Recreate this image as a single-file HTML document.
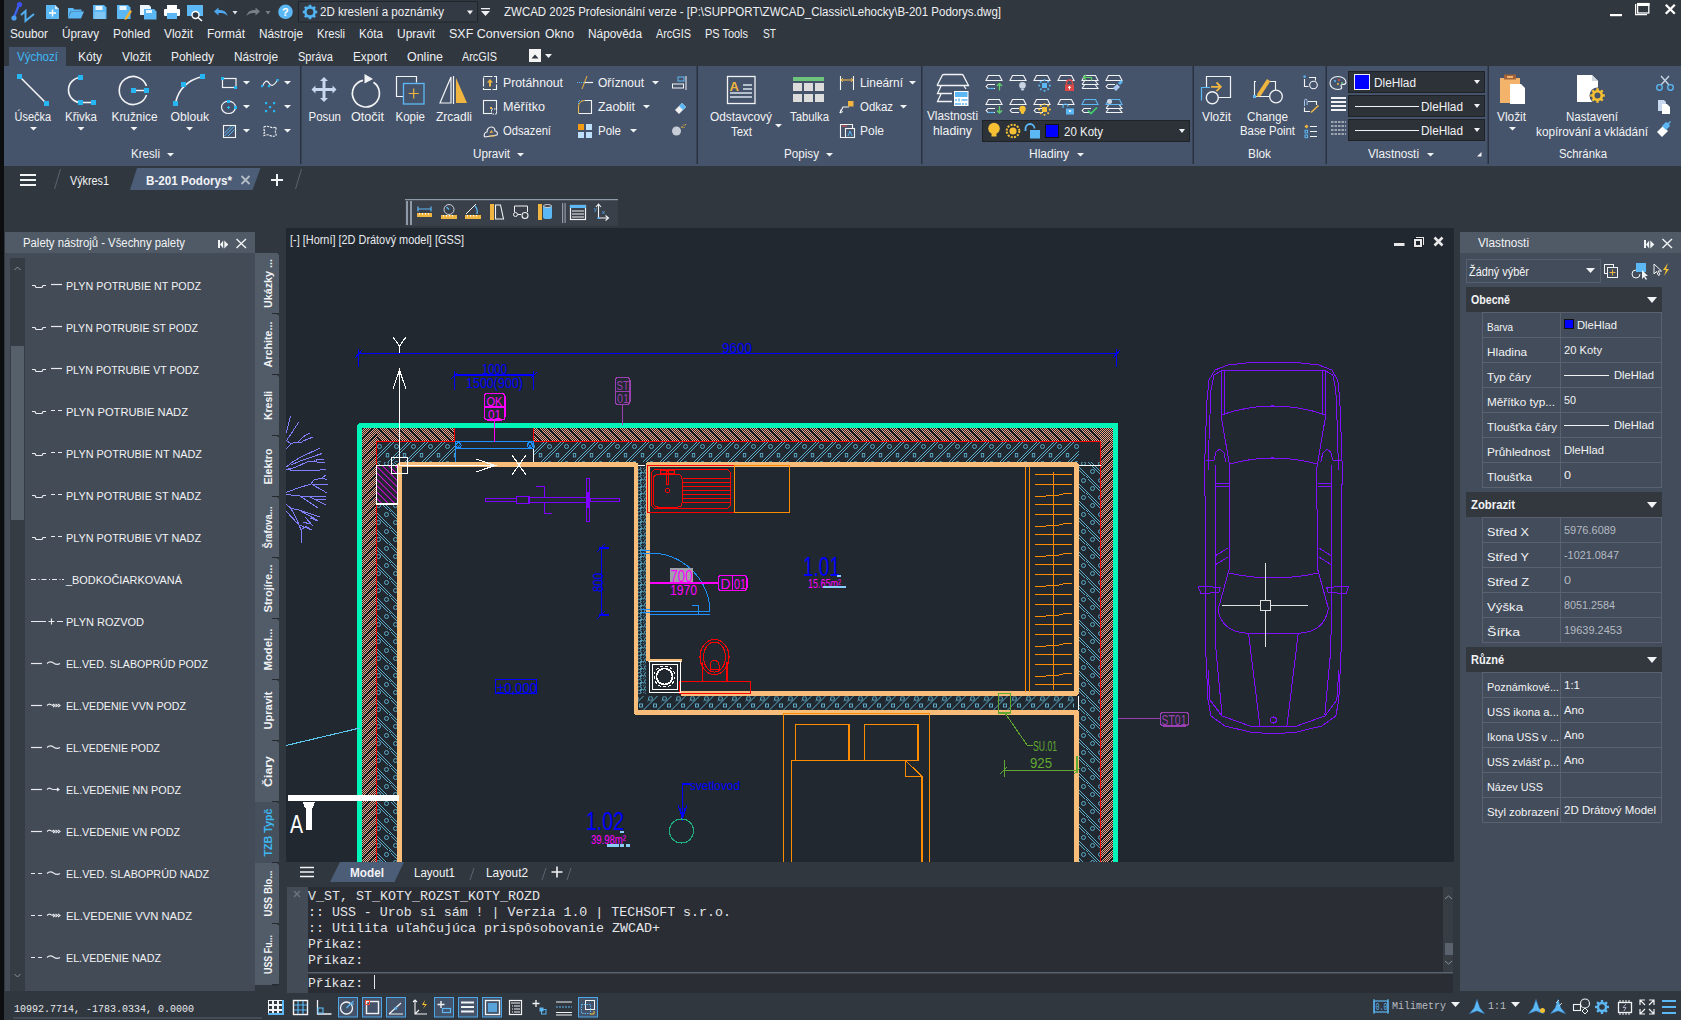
<!DOCTYPE html>
<html><head><meta charset="utf-8">
<style>
*{margin:0;padding:0;box-sizing:border-box}
html,body{width:1681px;height:1020px;overflow:hidden;background:#30363f;font-family:"Liberation Sans",sans-serif}
.a{position:absolute}

</style></head><body>
<div class="a" style="left:0px;top:0px;width:1681px;height:1020px;background:#31373f;"></div><div class="a" style="left:4px;top:66px;width:1677px;height:100px;background:#46546b;"></div><div class="a" style="left:286px;top:228px;width:1168px;height:634px;background:#212830;"></div><div class="a" style="left:5px;top:232px;width:250px;height:759px;background:#434b57;"></div><div class="a" style="left:5px;top:232px;width:250px;height:21px;background:#4f5a66;"></div><div class="a" style="left:1460px;top:232px;width:221px;height:759px;background:#434c5a;"></div><div class="a" style="left:1460px;top:232px;width:221px;height:21px;background:#4f5a66;"></div><div class="a" style="left:287px;top:887px;width:1166px;height:106px;background:#2a2d33;"></div><div class="a" style="left:287px;top:887px;width:21px;height:106px;background:#434b57;"></div><div class="a" style="left:0px;top:0px;width:4px;height:1020px;background:#0c0d0e;"></div><div class="a" style="left:9px;top:47px;width:57px;height:19px;background:#45536a;"></div>
<svg class="a" style="left:0;top:0" width="1681" height="1020" viewBox="0 0 1681 1020" font-family="Liberation Sans">
<line x1="19" y1="5" x2="14" y2="17" stroke="#3d63f0" stroke-width="2.2"/><circle cx="19.5" cy="4.5" r="2.6" fill="#3a52f5"/><circle cx="14" cy="18" r="2.6" fill="#4b9ff0"/><path d="M21 15 L25.5 11 L25.5 21 L34 14" fill="none" stroke="#53b0f0" stroke-width="2"/><path d="M46 5h9l4 4v10h-13z" fill="#5cb8f5"/><path d="M55 5v4h4" fill="#cfe9fb"/><path d="M52.5 9.5v7M49 13h7" stroke="#fff" stroke-width="1.4"/><path d="M68 8h5l1.5 1.5h7v2h-11l-2.5 7z" fill="#5cb8f5"/><path d="M71 11.5h13l-3 7h-13z" fill="#5cb8f5"/><path d="M93 5h11l2.5 2.5v11.5h-13.5z" fill="#5cb8f5"/><rect x="95.5" y="6" width="7" height="4" fill="#eaf5fd"/><rect x="94.5" y="12" width="10.5" height="7" fill="#eaf5fd" opacity=".25"/><path d="M117 5h11l2.5 2.5v11.5h-13.5z" fill="#5cb8f5"/><rect x="119.5" y="6" width="7" height="4" fill="#eaf5fd"/><path d="M125 18l5-8 2 1.2-5 8-2.5.8z" fill="#f2b233"/><path d="M140 5h9l2 2v8h-11z" fill="#eaf5fd"/><path d="M144 9h10l2.5 2.5v8h-12.5z" fill="#5cb8f5"/><rect x="146" y="10" width="6" height="3" fill="#eaf5fd"/><rect x="167" y="5" width="10" height="4" fill="#fff"/><rect x="164" y="9" width="16" height="7" rx="1" fill="#fff"/><rect x="167" y="13" width="10" height="6" fill="#5cb8f5"/><rect x="187" y="5" width="16" height="11" fill="#5cb8f5"/><rect x="188.5" y="6.5" width="13" height="8" fill="#30363f" opacity=".0"/><circle cx="195.5" cy="15" r="3.5" fill="#30363f" stroke="#fff" stroke-width="1.4"/><line x1="198" y1="17.5" x2="202" y2="21" stroke="#fff" stroke-width="1.6"/><path d="M214 11.5l4.5-4v2.5c5 0 8 1.5 9 6-2-2.5-4.5-3-9-3v2.5z" fill="#4fa7ee"/><path d="M232.5 11h5l-2.5 3.5z" fill="#dfe3e8"/><path d="M260 11.5l-4.5-4v2.5c-5 0-8 1.5-9 6 2-2.5 4.5-3 9-3v2.5z" fill="#7a7f86"/><path d="M265.5 11h5l-2.5 3.5z" fill="#7a7f86"/><circle cx="285.5" cy="11.8" r="7.3" fill="#5cb8f5"/><text x="282" y="16" font-size="11" fill="#fff" font-weight="bold">?</text><rect x="298.5" y="1.5" width="179" height="20.5" fill="#343a43" stroke="#22262c"/><g transform="translate(310,12)"><circle r="4.6" fill="none" stroke="#52b4f2" stroke-width="2.6"/><rect x="-1.3" y="-7.2" width="2.6" height="3" fill="#52b4f2" transform="rotate(0)"/><rect x="-1.3" y="-7.2" width="2.6" height="3" fill="#52b4f2" transform="rotate(45)"/><rect x="-1.3" y="-7.2" width="2.6" height="3" fill="#52b4f2" transform="rotate(90)"/><rect x="-1.3" y="-7.2" width="2.6" height="3" fill="#52b4f2" transform="rotate(135)"/><rect x="-1.3" y="-7.2" width="2.6" height="3" fill="#52b4f2" transform="rotate(180)"/><rect x="-1.3" y="-7.2" width="2.6" height="3" fill="#52b4f2" transform="rotate(225)"/><rect x="-1.3" y="-7.2" width="2.6" height="3" fill="#52b4f2" transform="rotate(270)"/><rect x="-1.3" y="-7.2" width="2.6" height="3" fill="#52b4f2" transform="rotate(315)"/></g><text x="320" y="16" font-size="12" fill="#eef0f3" textLength="124" lengthAdjust="spacingAndGlyphs">2D kreslení a poznámky</text><path d="M467 10.5h6l-3.0 4z" fill="#eef0f3"/><rect x="481" y="8" width="9" height="1.3" fill="#eef0f3"/><path d="M481 11h9l-4.5 5z" fill="#eef0f3"/><text x="504" y="15.8" font-size="12" fill="#eef0f3" textLength="497" lengthAdjust="spacingAndGlyphs">ZWCAD 2025 Profesionální verze - [P:\SUPPORT\ZWCAD_Classic\Lehocky\B-201 Podorys.dwg]</text><rect x="1610" y="14" width="12" height="2.2" fill="#fff"/><rect x="1637.6" y="3.6" width="11.2" height="9.4" fill="none" stroke="#fff" stroke-width="1.3"/><rect x="1637" y="3" width="12.5" height="3" fill="#fff"/><path d="M1635.6 4V14.6H1647" fill="none" stroke="#fff" stroke-width="1.2"/><path d="M1665.8 4.8l9 9M1674.8 4.8l-9 9" stroke="#fff" stroke-width="2.3"/><text x="10" y="37.5" font-size="12" fill="#eef0f3" textLength="38" lengthAdjust="spacingAndGlyphs">Soubor</text><text x="62" y="37.5" font-size="12" fill="#eef0f3" textLength="37" lengthAdjust="spacingAndGlyphs">Úpravy</text><text x="113" y="37.5" font-size="12" fill="#eef0f3" textLength="37" lengthAdjust="spacingAndGlyphs">Pohled</text><text x="164" y="37.5" font-size="12" fill="#eef0f3" textLength="29" lengthAdjust="spacingAndGlyphs">Vložit</text><text x="207" y="37.5" font-size="12" fill="#eef0f3" textLength="38" lengthAdjust="spacingAndGlyphs">Formát</text><text x="259" y="37.5" font-size="12" fill="#eef0f3" textLength="44" lengthAdjust="spacingAndGlyphs">Nástroje</text><text x="317" y="37.5" font-size="12" fill="#eef0f3" textLength="28" lengthAdjust="spacingAndGlyphs">Kresli</text><text x="359" y="37.5" font-size="12" fill="#eef0f3" textLength="24" lengthAdjust="spacingAndGlyphs">Kóta</text><text x="397" y="37.5" font-size="12" fill="#eef0f3" textLength="38" lengthAdjust="spacingAndGlyphs">Upravit</text><text x="449" y="37.5" font-size="12" fill="#eef0f3" textLength="91" lengthAdjust="spacingAndGlyphs">SXF Conversion</text><text x="545" y="37.5" font-size="12" fill="#eef0f3" textLength="29" lengthAdjust="spacingAndGlyphs">Okno</text><text x="588" y="37.5" font-size="12" fill="#eef0f3" textLength="54" lengthAdjust="spacingAndGlyphs">Nápověda</text><text x="656" y="37.5" font-size="12" fill="#eef0f3" textLength="35" lengthAdjust="spacingAndGlyphs">ArcGIS</text><text x="705" y="37.5" font-size="12" fill="#eef0f3" textLength="43" lengthAdjust="spacingAndGlyphs">PS Tools</text><text x="763" y="37.5" font-size="12" fill="#eef0f3" textLength="13" lengthAdjust="spacingAndGlyphs">ST</text><text x="17" y="60.5" font-size="12" fill="#3db7f2" textLength="41" lengthAdjust="spacingAndGlyphs">Výchozí</text><text x="78" y="60.5" font-size="12" fill="#eef0f3" textLength="24" lengthAdjust="spacingAndGlyphs">Kóty</text><text x="122" y="60.5" font-size="12" fill="#eef0f3" textLength="29" lengthAdjust="spacingAndGlyphs">Vložit</text><text x="171" y="60.5" font-size="12" fill="#eef0f3" textLength="43" lengthAdjust="spacingAndGlyphs">Pohledy</text><text x="234" y="60.5" font-size="12" fill="#eef0f3" textLength="44" lengthAdjust="spacingAndGlyphs">Nástroje</text><text x="298" y="60.5" font-size="12" fill="#eef0f3" textLength="35" lengthAdjust="spacingAndGlyphs">Správa</text><text x="353" y="60.5" font-size="12" fill="#eef0f3" textLength="34" lengthAdjust="spacingAndGlyphs">Export</text><text x="407" y="60.5" font-size="12" fill="#eef0f3" textLength="36" lengthAdjust="spacingAndGlyphs">Online</text><text x="462" y="60.5" font-size="12" fill="#eef0f3" textLength="35" lengthAdjust="spacingAndGlyphs">ArcGIS</text><rect x="529" y="49" width="12" height="13" fill="#f4f4f4"/><path d="M531.5 58.5h7l-3.5-4z" fill="#30363f"/><path d="M545 54h7l-3.5 4z" fill="#eef0f3"/><rect x="300" y="66" width="1.5" height="98" fill="#2a3140"/><rect x="696.5" y="66" width="1.5" height="98" fill="#2a3140"/><rect x="921" y="66" width="1.5" height="98" fill="#2a3140"/><rect x="1192.5" y="66" width="1.5" height="98" fill="#2a3140"/><rect x="1325.5" y="66" width="1.5" height="98" fill="#2a3140"/><rect x="1487.5" y="66" width="1.5" height="98" fill="#2a3140"/><line x1="19.5" y1="76.5" x2="46.5" y2="103.5" stroke="#f2f3f5" stroke-width="1.6"/><rect x="17" y="74" width="5" height="5" fill="#27b6f4"/><rect x="44" y="101" width="5" height="5" fill="#27b6f4"/><text x="14.5" y="120.5" font-size="12" fill="#f2f3f5" textLength="36.5" lengthAdjust="spacingAndGlyphs">Úsečka</text><path d="M30 127h7l-3.5 3.5z" fill="#f2f3f5"/><path d="M81 77.5 A12.5 12.5 0 0 0 81 102.5 H93" fill="none" stroke="#f2f3f5" stroke-width="1.6"/><rect x="78" y="75" width="5" height="5" fill="#27b6f4"/><rect x="78" y="100" width="5" height="5" fill="#27b6f4"/><rect x="91" y="100" width="5" height="5" fill="#27b6f4"/><text x="65" y="120.5" font-size="12" fill="#f2f3f5" textLength="32" lengthAdjust="spacingAndGlyphs">Křivka</text><path d="M77.5 127h7l-3.5 3.5z" fill="#f2f3f5"/><path d="M146.5 86 A14 14 0 1 0 146.5 95" fill="none" stroke="#f2f3f5" stroke-width="1.6"/><line x1="133" y1="90.5" x2="147" y2="90.5" stroke="#f2f3f5" stroke-width="1.4"/><rect x="131" y="88" width="5" height="5" fill="#27b6f4"/><rect x="144" y="88" width="5" height="5" fill="#27b6f4"/><text x="111.5" y="120.5" font-size="12" fill="#f2f3f5" textLength="46" lengthAdjust="spacingAndGlyphs">Kružnice</text><path d="M130.5 127h7l-3.5 3.5z" fill="#f2f3f5"/><path d="M175.5 103 Q180 82 202.5 76.5" fill="none" stroke="#f2f3f5" stroke-width="1.6"/><rect x="173" y="101" width="5" height="5" fill="#27b6f4"/><rect x="181" y="82" width="5" height="5" fill="#27b6f4"/><rect x="200" y="74" width="5" height="5" fill="#27b6f4"/><text x="170.5" y="120.5" font-size="12" fill="#f2f3f5" textLength="38.5" lengthAdjust="spacingAndGlyphs">Oblouk</text><path d="M186 127h7l-3.5 3.5z" fill="#f2f3f5"/><rect x="222.5" y="78.5" width="13.5" height="9" fill="none" stroke="#f2f3f5" stroke-width="1.2"/><rect x="221" y="77" width="3" height="3" fill="#27b6f4"/><rect x="234" y="86" width="3" height="3" fill="#27b6f4"/><path d="M243 81h7l-3.5 3.5z" fill="#f2f3f5"/><path d="M284 81h7l-3.5 3.5z" fill="#f2f3f5"/><path d="M262.5 86 Q266 78 269 83 Q272 89 277.5 80" fill="none" stroke="#f2f3f5" stroke-width="1.2"/><rect x="261" y="85" width="2.2" height="2.2" fill="#27b6f4"/><rect x="268" y="85" width="2.2" height="2.2" fill="#27b6f4"/><rect x="276.5" y="79" width="2.2" height="2.2" fill="#27b6f4"/><ellipse cx="228.5" cy="107.3" rx="7" ry="6.2" fill="none" stroke="#f2f3f5" stroke-width="1.2"/><rect x="227" y="100" width="3" height="3" fill="#27b6f4"/><rect x="234" y="106" width="3" height="3" fill="#27b6f4"/><path d="M228.5 106v3M227 107.5h3" stroke="#27b6f4" stroke-width="1"/><path d="M243 105h7l-3.5 3.5z" fill="#f2f3f5"/><path d="M284 105h7l-3.5 3.5z" fill="#f2f3f5"/><rect x="265" y="102" width="2.2" height="2.2" fill="#27b6f4"/><rect x="273" y="102" width="2.2" height="2.2" fill="#27b6f4"/><rect x="269" y="106" width="2.2" height="2.2" fill="#27b6f4"/><rect x="265" y="110" width="2.2" height="2.2" fill="#27b6f4"/><rect x="273" y="110" width="2.2" height="2.2" fill="#27b6f4"/><rect x="223.5" y="125.5" width="12" height="12" fill="none" stroke="#f2f3f5" stroke-width="1.1"/><path d="M224.5 133l7-7M224.5 136l10-10M228 136l6.5-6.5" stroke="#5cb8f5" stroke-width="1"/><path d="M243 129h7l-3.5 3.5z" fill="#f2f3f5"/><path d="M284 129h7l-3.5 3.5z" fill="#f2f3f5"/><path d="M264 127 q3-1.5 6 0 q3 1.5 6 0 v3 q-1.5 2 0 3 v2.5 q-3 1.5-6 0 q-3-1.5-6 0 v-2.5 q1.5-1.5 0-3z" fill="none" stroke="#f2f3f5" stroke-width="1.1" stroke-dasharray="2.2 1"/><text x="131" y="158" font-size="12" fill="#f2f3f5" textLength="29" lengthAdjust="spacingAndGlyphs">Kresli</text><path d="M167 153h7l-3.5 3.5z" fill="#f2f3f5"/><g fill="#c8d8ee"><path d="M324 77l4 4h-2.5v7h7v-2.5l4 4-4 4v-2.5h-7v7h2.5l-4 4-4-4h2.5v-7h-7v2.5l-4-4 4-4v2.5h7v-7h-2.5z"/></g><text x="308.5" y="120.5" font-size="12" fill="#f2f3f5" textLength="32.5" lengthAdjust="spacingAndGlyphs">Posun</text><path d="M373.5 82.3 A13.5 13.5 0 1 1 363 80.3" fill="none" stroke="#f2f3f5" stroke-width="1.7"/><path d="M364.5 74l8.5 5-8.5 4.5z" fill="#f2f3f5"/><text x="351" y="120.5" font-size="12" fill="#f2f3f5" textLength="33" lengthAdjust="spacingAndGlyphs">Otočit</text><path d="M403 96.5h-6.5v-20h20v6" fill="none" stroke="#f2f3f5" stroke-width="1.2"/><rect x="403.5" y="83.5" width="20.5" height="20.5" fill="none" stroke="#5cb8f5" stroke-width="1.3"/><path d="M413.7 88.5v10M408.7 93.5h10" stroke="#f0b540" stroke-width="1.2"/><text x="395.5" y="120.5" font-size="12" fill="#f2f3f5" textLength="29.5" lengthAdjust="spacingAndGlyphs">Kopie</text><path d="M451 77v26h-11z" fill="none" stroke="#f2f3f5" stroke-width="1.2"/><line x1="453.5" y1="76" x2="453.5" y2="104" stroke="#f2f3f5" stroke-width="1.2"/><path d="M456 78l11 25h-11z" fill="#f0b540"/><text x="436" y="120.5" font-size="12" fill="#f2f3f5" textLength="36" lengthAdjust="spacingAndGlyphs">Zrcadli</text><rect x="483.5" y="76.5" width="13" height="13" fill="none" stroke="#f2f3f5" stroke-width="1.1" stroke-dasharray="9 1.5"/><path d="M490 79l3 3.5h-2v4h-2v-4h-2z" fill="#f0b540"/><text x="503" y="87" font-size="12" fill="#f2f3f5" textLength="60" lengthAdjust="spacingAndGlyphs">Protáhnout</text><rect x="483.5" y="100.5" width="13" height="13" fill="none" stroke="#f2f3f5" stroke-width="1.1"/><rect x="490" y="107" width="2" height="2" fill="#f0b540"/><rect x="491.5" y="109" width="5" height="5" fill="#45536a" stroke="#f2f3f5" stroke-width="1" stroke-dasharray="1.5 1"/><text x="503" y="111" font-size="12" fill="#f2f3f5" textLength="42" lengthAdjust="spacingAndGlyphs">Měřítko</text><path d="M485 137c-2-2 0-5 2-5 0-3 2-5 4-5 3 0 4 2 4 4 2 0 3 2 2 4z" fill="none" stroke="#f2f3f5" stroke-width="1.1"/><path d="M489 136h6M490 133l1.5-2 1 2" stroke="#f0b540" stroke-width="1.1" fill="none"/><text x="503" y="135" font-size="12" fill="#f2f3f5" textLength="48" lengthAdjust="spacingAndGlyphs">Odsazení</text><path d="M577 82.5h7M589 82.5h4" stroke="#5cb8f5" stroke-width="1" stroke-dasharray="1 1"/><path d="M584 82.5h9" stroke="#f2f3f5" stroke-width="1.2"/><line x1="582" y1="89" x2="587" y2="76" stroke="#f0b540" stroke-width="1"/><text x="598" y="87" font-size="12" fill="#f2f3f5" textLength="46" lengthAdjust="spacingAndGlyphs">Oříznout</text><path d="M652 81h7l-3.5 3.5z" fill="#f2f3f5"/><path d="M578.5 113.5h13v-13h-7" fill="none" stroke="#f2f3f5" stroke-width="1.1"/><path d="M578.5 113v-6q0-6 6-6.5" fill="none" stroke="#f0b540" stroke-width="1"/><path d="M578.5 104v-3.5h3" fill="none" stroke="#5cb8f5" stroke-width="1" stroke-dasharray="1 1"/><text x="598" y="111" font-size="12" fill="#f2f3f5" textLength="37" lengthAdjust="spacingAndGlyphs">Zaoblit</text><path d="M643 105h7l-3.5 3.5z" fill="#f2f3f5"/><rect x="578" y="124" width="6" height="6" fill="#f39c12"/><rect x="586" y="124" width="6" height="6" fill="#bfe0fa"/><rect x="578" y="132" width="6" height="6" fill="#bfe0fa"/><rect x="586" y="132" width="6" height="6" fill="#bfe0fa"/><text x="598" y="135" font-size="12" fill="#f2f3f5" textLength="23" lengthAdjust="spacingAndGlyphs">Pole</text><path d="M630 129h7l-3.5 3.5z" fill="#f2f3f5"/><rect x="678" y="77" width="6" height="4" fill="none" stroke="#5cb8f5" stroke-width="1"/><rect x="672.5" y="84" width="11" height="4" fill="none" stroke="#f2f3f5" stroke-width="1"/><line x1="686" y1="76" x2="686" y2="90" stroke="#f2f3f5" stroke-width="1"/><path d="M675 110l7-7 4 4-7 7z" fill="#f0f0f0"/><path d="M679 106l3-3 4 4-3 3z" fill="#5cb8f5"/><circle cx="676.5" cy="131" r="4.5" fill="#c7cdd6"/><path d="M683 124.5l1 1M686 124l-1 1.5M681 127h2M684.5 128l-1-1" stroke="#f0b540" stroke-width="1"/><text x="473" y="158" font-size="12" fill="#f2f3f5" textLength="37" lengthAdjust="spacingAndGlyphs">Upravit</text><path d="M517 153h7l-3.5 3.5z" fill="#f2f3f5"/><rect x="727.5" y="76.5" width="27.5" height="27" fill="none" stroke="#f2f3f5" stroke-width="1.3"/><text x="729.5" y="90.5" font-size="13" fill="#f0b540" font-weight="bold">A</text><path d="M743 85h9M743 89h9M730 93h22M730 97h22" stroke="#d8e2ee" stroke-width="1.6"/><text x="710" y="120.5" font-size="12" fill="#f2f3f5" textLength="62" lengthAdjust="spacingAndGlyphs">Odstavcový</text><text x="731" y="135.8" font-size="12" fill="#f2f3f5" textLength="21" lengthAdjust="spacingAndGlyphs">Text</text><path d="M775 124h7l-3.5 3.5z" fill="#f2f3f5"/><rect x="793" y="77" width="31" height="4" fill="#6fc57d"/><rect x="793" y="83" width="9" height="8" fill="#dcdcdc"/><rect x="793" y="94" width="9" height="8" fill="#dcdcdc"/><rect x="804" y="83" width="9" height="8" fill="#dcdcdc"/><rect x="804" y="94" width="9" height="8" fill="#dcdcdc"/><rect x="815" y="83" width="9" height="8" fill="#dcdcdc"/><rect x="815" y="94" width="9" height="8" fill="#dcdcdc"/><text x="790" y="120.5" font-size="12" fill="#f2f3f5" textLength="39" lengthAdjust="spacingAndGlyphs">Tabulka</text><path d="M840.5 76v14M853.5 76v14" stroke="#f2f3f5" stroke-width="1.1"/><path d="M841 80h12" stroke="#f0b540" stroke-width="1.1"/><path d="M843 78l-2 2 2 2M851 78l2 2-2 2" fill="none" stroke="#f0b540" stroke-width="1"/><text x="860" y="87" font-size="12" fill="#f2f3f5" textLength="43" lengthAdjust="spacingAndGlyphs">Lineární</text><path d="M909 81h7l-3.5 3.5z" fill="#f2f3f5"/><path d="M840 113l3-6h6" fill="none" stroke="#f2f3f5" stroke-width="1.1"/><rect x="848" y="101" width="5.5" height="5.5" fill="#f0b540"/><path d="M840 113l1-3.5M840 113l3-1.5" stroke="#f2f3f5" stroke-width="1"/><text x="860" y="111" font-size="12" fill="#f2f3f5" textLength="33" lengthAdjust="spacingAndGlyphs">Odkaz</text><path d="M900 105h7l-3.5 3.5z" fill="#f2f3f5"/><path d="M845.5 137.5h-5v-13h12v4" fill="none" stroke="#f2f3f5" stroke-width="1.1"/><line x1="842" y1="126" x2="847" y2="126" stroke="#e74c3c" stroke-width="1"/><rect x="845.5" y="128.5" width="9" height="9" fill="none" stroke="#f2f3f5" stroke-width="1.1"/><path d="M848 136l2-5 2 5" fill="none" stroke="#5cb8f5" stroke-width="1"/><text x="860" y="135" font-size="12" fill="#f2f3f5" textLength="24" lengthAdjust="spacingAndGlyphs">Pole</text><text x="784" y="158" font-size="12" fill="#f2f3f5" textLength="35" lengthAdjust="spacingAndGlyphs">Popisy</text><path d="M826 153h7l-3.5 3.5z" fill="#f2f3f5"/><path d="M937 85.5L942.5 75Q943 74.5 944 74.5H961.5Q962.5 74.5 963 75L968.5 85.5H937M941 86L937.5 93.5H952M941 94L937.5 101.5H952M964 86L966 89" fill="none" stroke="#f2f3f5" stroke-width="1.3"/><rect x="954" y="91" width="14.5" height="15" fill="#fff"/><rect x="955" y="92" width="12.5" height="5" fill="#5cb8f5"/><path d="M955 100h2M959 98.5v3M961.5 100h6M955 104h6M963 103v2M965 104h2" stroke="#5cb8f5" stroke-width="1.4"/><text x="927" y="120" font-size="12" fill="#f2f3f5" textLength="51" lengthAdjust="spacingAndGlyphs">Vlastnosti</text><text x="933" y="135" font-size="12" fill="#f2f3f5" textLength="39" lengthAdjust="spacingAndGlyphs">hladiny</text><path d="M986 80.5L988.5 75.5H999.5L1002 80.5Z" fill="none" stroke="#f2f3f5" stroke-width="1.1"/><path d="M995 84.5H988L986.2 86.5L988 88.5H995" fill="none" stroke="#f2f3f5" stroke-width="1.1"/><path d="M988 88.5H994" stroke="#5cb8f5" stroke-width="1.2"/><path d="M999.5 90.5v-7M997 86l2.5-2.5 2.5 2.5" stroke="#5fd068" stroke-width="1.3" fill="none"/><path d="M1010 80.5L1012.5 75.5H1023.5L1026 80.5Z" fill="none" stroke="#f2f3f5" stroke-width="1.1"/><circle cx="1022.5" cy="85.3" r="3.3" fill="#c8d4e4"/><path d="M1020.5 88.5h4l-1 2h-2z" fill="#c8d4e4"/><path d="M1034 80.5L1036.5 75.5H1047.5L1050 80.5Z" fill="none" stroke="#f2f3f5" stroke-width="1.1"/><rect x="1042" y="83" width="5" height="5" fill="#5cb8f5"/><rect x="1048.9" y="84.6" width="1.8" height="1.8" fill="#5cb8f5"/><rect x="1047.3" y="88.3" width="1.8" height="1.8" fill="#5cb8f5"/><rect x="1043.6" y="89.9" width="1.8" height="1.8" fill="#5cb8f5"/><rect x="1039.9" y="88.4" width="1.8" height="1.8" fill="#5cb8f5"/><rect x="1038.3" y="84.6" width="1.8" height="1.8" fill="#5cb8f5"/><rect x="1039.8" y="80.9" width="1.8" height="1.8" fill="#5cb8f5"/><rect x="1043.6" y="79.3" width="1.8" height="1.8" fill="#5cb8f5"/><rect x="1047.3" y="80.8" width="1.8" height="1.8" fill="#5cb8f5"/><path d="M1058 80.5L1060.5 75.5H1071.5L1074 80.5Z" fill="none" stroke="#f2f3f5" stroke-width="1.1"/><rect x="1065" y="84.5" width="9" height="6.5" fill="#e04848"/><path d="M1066.5 84.5v-1.5a3 3 0 0 1 6 0v1.5" fill="none" stroke="#e04848" stroke-width="1.3"/><path d="M1069.5 86v3.5M1068 87.3h3" stroke="#fff" stroke-width="1"/><path d="M1082 80.5L1084.5 75.5H1095.5L1098 80.5Z" fill="none" stroke="#f2f3f5" stroke-width="1.1"/><path d="M1082 84.5L1084.5 81.0M1095.5 81.0L1098 84.5H1082" fill="none" stroke="#f2f3f5" stroke-width="1.1"/><path d="M1082 88.5L1084.5 85.0M1095.5 85.0L1098 88.5H1082" fill="none" stroke="#f2f3f5" stroke-width="1.1"/><path d="M1091.5 80.5V77.5H1083.5M1086 75l-2.5 2.5 2.5 2.5" fill="none" stroke="#5fd068" stroke-width="1.2"/><path d="M1106 80.5L1108.5 75.5H1119.5L1122 80.5Z" fill="none" stroke="#f2f3f5" stroke-width="1.1"/><path d="M1115 84.5H1108L1106.2 86.5L1108 88.5H1115" fill="none" stroke="#f2f3f5" stroke-width="1.1"/><path d="M1113 88l4-4 3 3-4 4z" fill="#a8c8f0"/><path d="M1118 83l3-3 2 2-3 3z" fill="#5cb8f5"/><path d="M986 104.5L988.5 99.5H999.5L1002 104.5Z" fill="none" stroke="#f2f3f5" stroke-width="1.1"/><path d="M995 108.5H988L986.2 110.5L988 112.5H995" fill="none" stroke="#f2f3f5" stroke-width="1.1"/><path d="M988 112.5H994" stroke="#5cb8f5" stroke-width="1.2"/><path d="M999.5 106v7M997 110.5l2.5 2.5 2.5-2.5" stroke="#5fd068" stroke-width="1.3" fill="none"/><path d="M1010 104.5L1012.5 99.5H1023.5L1026 104.5Z" fill="none" stroke="#f2f3f5" stroke-width="1.1"/><path d="M1019 108.5H1012L1010.2 110.5L1012 112.5H1019" fill="none" stroke="#f2f3f5" stroke-width="1.1"/><circle cx="1022.5" cy="109" r="3.2" fill="#f5c033"/><path d="M1020.5 112h4l-1 2h-2z" fill="#f5c033"/><path d="M1034 104.5L1036.5 99.5H1047.5L1050 104.5Z" fill="none" stroke="#f2f3f5" stroke-width="1.1"/><path d="M1043 108.5H1036L1034.2 110.5L1036 112.5H1043" fill="none" stroke="#f2f3f5" stroke-width="1.1"/><rect x="1042" y="107" width="5" height="5" fill="#f5c033"/><rect x="1048.9" y="108.6" width="1.8" height="1.8" fill="#f5c033"/><rect x="1047.3" y="112.3" width="1.8" height="1.8" fill="#f5c033"/><rect x="1043.6" y="113.9" width="1.8" height="1.8" fill="#f5c033"/><rect x="1039.9" y="112.4" width="1.8" height="1.8" fill="#f5c033"/><rect x="1038.3" y="108.6" width="1.8" height="1.8" fill="#f5c033"/><rect x="1039.8" y="104.9" width="1.8" height="1.8" fill="#f5c033"/><rect x="1043.6" y="103.3" width="1.8" height="1.8" fill="#f5c033"/><rect x="1047.3" y="104.8" width="1.8" height="1.8" fill="#f5c033"/><path d="M1058 104.5L1060.5 99.5H1071.5L1074 104.5Z" fill="none" stroke="#f2f3f5" stroke-width="1.1"/><rect x="1066" y="108.5" width="8" height="6" fill="#5cb8f5"/><path d="M1063 108v-1.5a2.5 2.5 0 0 1 5 0" fill="none" stroke="#5cb8f5" stroke-width="1.2"/><circle cx="1070" cy="111" r="1" fill="#fff"/><path d="M1082 104.5L1084.5 99.5H1095.5L1098 104.5Z" fill="none" stroke="#5cb8f5" stroke-width="1.1"/><path d="M1091 108.5H1084L1082.2 110.5L1084 112.5H1091" fill="none" stroke="#f2f3f5" stroke-width="1.1"/><path d="M1088 110.5l3 3 6-6" stroke="#3ecf6a" stroke-width="1.6" fill="none"/><path d="M1106 104.5L1108.5 99.5H1119.5L1122 104.5Z" fill="none" stroke="#5cb8f5" stroke-width="1.1"/><path d="M1106 108.5L1108.5 105.0M1119.5 105.0L1122 108.5H1106" fill="none" stroke="#f2f3f5" stroke-width="1.1"/><path d="M1106 112.5L1108.5 109.0M1119.5 109.0L1122 112.5H1106" fill="none" stroke="#f2f3f5" stroke-width="1.1"/><circle cx="1109.5" cy="101.5" r="2.5" fill="#c8d4e4"/><rect x="982.5" y="120.5" width="207" height="21" fill="#2d3239" stroke="#1f2328"/><circle cx="994" cy="128.5" r="5.8" fill="#f5c033"/><rect x="991.5" y="133.5" width="5" height="3" fill="#f5c033"/><circle cx="1013" cy="131" r="3.6" fill="#f5c033"/><circle cx="1013" cy="131" r="6.3" fill="none" stroke="#f5c033" stroke-width="2" stroke-dasharray="2 1.3"/><path d="M1025.5 131v-2.5a4.5 4.5 0 0 1 9 0" fill="none" stroke="#5cb8f5" stroke-width="1.8"/><rect x="1030" y="130" width="10" height="8.5" fill="#5cb8f5"/><rect x="1045.5" y="124.5" width="13" height="13" fill="#0000ff" stroke="#111" stroke-width="1"/><text x="1064" y="135.5" font-size="12" fill="#f2f3f5" textLength="39" lengthAdjust="spacingAndGlyphs">20 Koty</text><path d="M1179 129h6l-3.0 4z" fill="#f2f3f5"/><text x="1029" y="158" font-size="12" fill="#f2f3f5" textLength="40" lengthAdjust="spacingAndGlyphs">Hladiny</text><path d="M1077 153h7l-3.5 3.5z" fill="#f2f3f5"/><path d="M1218 97.5H1230.5V76.5H1206.5V87.5" fill="none" stroke="#f2f3f5" stroke-width="1.2"/><path d="M1201.5 100.5V87.5H1210" fill="none" stroke="#5cb8f5" stroke-width="1.2"/><path d="M1211 86.8h9M1216.5 82.5l4.3 4.3-4.3 4.3" fill="none" stroke="#f0b540" stroke-width="1.8"/><circle cx="1212.3" cy="97.8" r="6" fill="none" stroke="#f2f3f5" stroke-width="1.4"/><text x="1202" y="120.5" font-size="12" fill="#f2f3f5" textLength="29" lengthAdjust="spacingAndGlyphs">Vložit</text><path d="M1256 81.5H1254.5V96.5H1270M1270 81.5H1275.5V90" fill="none" stroke="#f2f3f5" stroke-width="1.1"/><circle cx="1276" cy="96.5" r="6.3" fill="none" stroke="#f2f3f5" stroke-width="1.3"/><path d="M1257.5 93.5l9.5-14.5 3.3 2.2-9.5 14.5-4 1.2z" fill="#f0b540"/><rect x="1253" y="95" width="3" height="3" fill="#5cb8f5"/><text x="1247" y="120.5" font-size="12" fill="#f2f3f5" textLength="41" lengthAdjust="spacingAndGlyphs">Change</text><text x="1240" y="135" font-size="12" fill="#f2f3f5" textLength="55" lengthAdjust="spacingAndGlyphs">Base Point</text><path d="M1304.5 79v7.5h4M1309 77.5h6.5v3" fill="none" stroke="#f2f3f5" stroke-width="1.1"/><rect x="1303.5" y="75.5" width="2.2" height="2.2" fill="#5cb8f5"/><circle cx="1313.5" cy="85" r="3.8" fill="none" stroke="#f2f3f5" stroke-width="1.1"/><path d="M1304.5 106v-5.5a1.3 1.3 0 0 1 2.6 0v4.5" fill="none" stroke="#a8c8f0" stroke-width="1"/><path d="M1308 101.5H1316.5V105M1304.5 107.5V111.5H1310" fill="none" stroke="#f2f3f5" stroke-width="1.1"/><path d="M1311 112.5l7.5-7" stroke="#f0b540" stroke-width="1.6"/><path d="M1306.5 124.5l2 2-2 2-2-2z" fill="#f0b540"/><rect x="1305" y="130.3" width="2.6" height="2.6" fill="none" stroke="#5cb8f5" stroke-width="1"/><rect x="1305" y="135" width="2.6" height="2.6" fill="none" stroke="#5cb8f5" stroke-width="1"/><path d="M1310 126.5h7M1310 131.5h7M1310 136.5h7" stroke="#f2f3f5" stroke-width="1.1"/><text x="1248" y="158" font-size="12" fill="#f2f3f5" textLength="23" lengthAdjust="spacingAndGlyphs">Blok</text><path d="M1338 76.5c5 0 8 3 8 6 0 2-2 2-3.5 2-1.5 0-2 1.5-1 2.5 1 1.5-1 2.5-3.5 2.5-5 0-8-3-8-6.5s3-6.5 8-6.5z" fill="none" stroke="#f2f3f5" stroke-width="1.1"/><circle cx="1335" cy="81" r="1" fill="#5cb8f5"/><circle cx="1339" cy="80" r="1" fill="#e74c3c"/><circle cx="1342" cy="83" r="1" fill="#6fc57d"/><circle cx="1338" cy="84" r="1" fill="#f0b540"/><path d="M1331 98h15M1331 102h15M1331 106h15M1331 110h15" stroke="#f2f3f5" stroke-width="1.8"/><path d="M1331 122h15M1331 126h15M1331 130h15M1331 134h15" stroke="#f2f3f5" stroke-width="1" stroke-dasharray="2.5 1"/><rect x="1348.5" y="71.5" width="136" height="21" fill="#2d3239" stroke="#1f2328"/><path d="M1474 80.0h6l-3.0 4z" fill="#f2f3f5"/><rect x="1348.5" y="95.5" width="136" height="21" fill="#2d3239" stroke="#1f2328"/><path d="M1474 104.0h6l-3.0 4z" fill="#f2f3f5"/><rect x="1348.5" y="119.5" width="136" height="21" fill="#2d3239" stroke="#1f2328"/><path d="M1474 128.0h6l-3.0 4z" fill="#f2f3f5"/><rect x="1354.5" y="74.5" width="15" height="15" fill="#0000ff" stroke="#eee" stroke-width="1"/><text x="1374" y="87" font-size="12" fill="#f2f3f5" textLength="42" lengthAdjust="spacingAndGlyphs">DleHlad</text><line x1="1355" y1="106.5" x2="1419" y2="106.5" stroke="#f2f3f5" stroke-width="1"/><text x="1421" y="111" font-size="12" fill="#f2f3f5" textLength="42" lengthAdjust="spacingAndGlyphs">DleHlad</text><line x1="1355" y1="130.5" x2="1419" y2="130.5" stroke="#f2f3f5" stroke-width="1"/><text x="1421" y="135" font-size="12" fill="#f2f3f5" textLength="42" lengthAdjust="spacingAndGlyphs">DleHlad</text><text x="1368" y="158" font-size="12" fill="#f2f3f5" textLength="51" lengthAdjust="spacingAndGlyphs">Vlastnosti</text><path d="M1427 153h7l-3.5 3.5z" fill="#f2f3f5"/><path d="M1481.5 152v4.5h-4.5z" fill="#f2f3f5"/><rect x="1500" y="78" width="20" height="25" fill="#f4b36b"/><rect x="1504" y="74.5" width="12" height="5" fill="#a0623a"/><rect x="1507" y="76" width="6" height="2" fill="#f4b36b"/><path d="M1510 84h11l4 4v16h-15z" fill="#fff"/><text x="1497" y="120.5" font-size="12" fill="#f2f3f5" textLength="29" lengthAdjust="spacingAndGlyphs">Vložit</text><path d="M1509 127h7l-3.5 3.5z" fill="#f2f3f5"/><path d="M1577 75h15l6 6v21h-21z" fill="#fff"/><path d="M1592 75v6h6" fill="#d0d6de"/><circle cx="1597.5" cy="95.5" r="8" fill="#45536a"/><g transform="translate(1597.5,95.5)"><circle r="4.3" fill="none" stroke="#f5c033" stroke-width="2.6"/><rect x="-1.2" y="-7.3" width="2.4" height="3" fill="#f5c033" transform="rotate(0)"/><rect x="-1.2" y="-7.3" width="2.4" height="3" fill="#f5c033" transform="rotate(45)"/><rect x="-1.2" y="-7.3" width="2.4" height="3" fill="#f5c033" transform="rotate(90)"/><rect x="-1.2" y="-7.3" width="2.4" height="3" fill="#f5c033" transform="rotate(135)"/><rect x="-1.2" y="-7.3" width="2.4" height="3" fill="#f5c033" transform="rotate(180)"/><rect x="-1.2" y="-7.3" width="2.4" height="3" fill="#f5c033" transform="rotate(225)"/><rect x="-1.2" y="-7.3" width="2.4" height="3" fill="#f5c033" transform="rotate(270)"/><rect x="-1.2" y="-7.3" width="2.4" height="3" fill="#f5c033" transform="rotate(315)"/></g><text x="1566" y="120.5" font-size="12" fill="#f2f3f5" textLength="52" lengthAdjust="spacingAndGlyphs">Nastavení</text><text x="1536" y="135.5" font-size="12" fill="#f2f3f5" textLength="112" lengthAdjust="spacingAndGlyphs">kopírování a vkládání</text><path d="M1661 76l8 9M1669 76l-8 9" stroke="#c8d4e4" stroke-width="1.4"/><circle cx="1659.5" cy="87.5" r="2.8" fill="none" stroke="#5cb8f5" stroke-width="1.3"/><circle cx="1670.5" cy="87.5" r="2.8" fill="none" stroke="#5cb8f5" stroke-width="1.3"/><path d="M1658 100h6l2 2v9h-8z" fill="#c8d8ee"/><path d="M1662 104h5l3 3v7h-8z" fill="#fff"/><path d="M1657 132l6-6 5 5-6 6z" fill="#fff"/><path d="M1662 126l4-4 2 1 2-2 1 1-2 2 1 2-4 4z" fill="#5cb8f5"/><text x="1559" y="158" font-size="12" fill="#f2f3f5" textLength="48" lengthAdjust="spacingAndGlyphs">Schránka</text><path d="M20 175h16M20 180h16M20 185h16" stroke="#f2f3f5" stroke-width="1.8"/><path d="M54.5 189l6-20" stroke="#5a6472" stroke-width="1"/><text x="70" y="184.5" font-size="12" fill="#f2f3f5" textLength="39" lengthAdjust="spacingAndGlyphs">Výkres1</text><path d="M130 190L137 168H260.5L252.5 190z" fill="#4c5d78"/><text x="146" y="184.5" font-size="12" fill="#f2f3f5" font-weight="bold" textLength="86" lengthAdjust="spacingAndGlyphs">B-201 Podorys*</text><path d="M241.5 176l8 8M249.5 176l-8 8" stroke="#b4bcc6" stroke-width="1.8"/><path d="M277 174v12M271 180h12" stroke="#f2f3f5" stroke-width="2"/><path d="M295.5 189l6-20" stroke="#5a6472" stroke-width="1"/><rect x="405" y="199" width="213" height="27" fill="#3a4049"/><rect x="405" y="199" width="213" height="1.2" fill="#8f9aa8"/><rect x="406" y="201" width="2" height="24" fill="#8f9aa8"/><rect x="410" y="201" width="2" height="24" fill="#8f9aa8"/><rect x="562" y="203" width="1.2" height="20" fill="#8f9aa8"/><rect x="564.5" y="203" width="1.2" height="20" fill="#8f9aa8"/><rect x="417" y="213" width="15" height="4" fill="#f0b540"/><rect x="419" y="213" width="1" height="1.5" fill="#fff"/><rect x="422" y="213" width="1" height="1.5" fill="#fff"/><rect x="425" y="213" width="1" height="1.5" fill="#fff"/><rect x="428" y="213" width="1" height="1.5" fill="#fff"/><path d="M418 209h13M418 206.5v5M431 206.5v5" stroke="#5cb8f5" stroke-width="1.2"/><rect x="441" y="215" width="16" height="4" fill="#f0b540"/><rect x="443" y="215" width="1" height="1.5" fill="#fff"/><rect x="446" y="215" width="1" height="1.5" fill="#fff"/><rect x="449" y="215" width="1" height="1.5" fill="#fff"/><rect x="452" y="215" width="1" height="1.5" fill="#fff"/><circle cx="449" cy="209.5" r="5" fill="none" stroke="#c8d0da" stroke-width="1"/><path d="M449 209.5l-2.5-2.5" stroke="#5cb8f5" stroke-width="1.2"/><rect x="465" y="215" width="16" height="4" fill="#f0b540"/><rect x="467" y="215" width="1" height="1.5" fill="#fff"/><rect x="470" y="215" width="1" height="1.5" fill="#fff"/><rect x="473" y="215" width="1" height="1.5" fill="#fff"/><rect x="476" y="215" width="1" height="1.5" fill="#fff"/><path d="M466 214l10-10" stroke="#f2f3f5" stroke-width="1"/><path d="M475 206q3 3 2 8" fill="none" stroke="#5cb8f5" stroke-width="1.2"/><rect x="490" y="204" width="4" height="16" fill="#f0b540"/><path d="M495.5 219v-14h5l3 14z" fill="none" stroke="#f2f3f5" stroke-width="1.1"/><path d="M514.5 212v-6h13v6" fill="none" stroke="#f2f3f5" stroke-width="1"/><circle cx="515.5" cy="214.5" r="2" fill="none" stroke="#f2f3f5" stroke-width="1"/><circle cx="525" cy="215.5" r="3" fill="none" stroke="#f2f3f5" stroke-width="1.1"/><path d="M518 214.5h3" stroke="#f2f3f5" stroke-width="1"/><rect x="538" y="204" width="4" height="16" fill="#f0b540"/><rect x="543" y="205" width="9" height="14" rx="2" fill="#5cb8f5"/><ellipse cx="547.5" cy="206" rx="4" ry="1.5" fill="#3a4049" stroke="#f2f3f5" stroke-width=".8"/><rect x="570.5" y="205.5" width="15" height="14" fill="none" stroke="#f2f3f5" stroke-width="1.2"/><rect x="570" y="205" width="16" height="3" fill="#5cb8f5"/><path d="M572 211h12M572 214h12M572 217h12" stroke="#f2f3f5" stroke-width="1"/><path d="M598.5 218v-14M596 207l2.5-3 2.5 3M598.5 218h10M605.5 215.5l3 2.5-3 2.5" fill="none" stroke="#f2f3f5" stroke-width="1.1"/><rect x="597.5" y="217" width="2" height="2" fill="#5cb8f5"/><text x="594" y="211" font-size="6" fill="#5cb8f5">y</text><text x="602" y="214" font-size="6" fill="#5cb8f5">x</text><text x="290" y="244" font-size="12" fill="#e8eaee" textLength="174" lengthAdjust="spacingAndGlyphs">[-] [Horní] [2D Drátový model] [GSS]</text><rect x="1394" y="243" width="10.5" height="3" fill="#e8e8e8"/><path d="M1416 239V237H1424V245H1422" fill="#e8e8e8"/><rect x="1416" y="237" width="8" height="8" fill="#e8e8e8"/><rect x="1413.5" y="238.5" width="9" height="9" fill="#e8e8e8" stroke="#1a1e24" stroke-width="1"/><rect x="1416" y="241" width="4" height="4" fill="#212830"/><path d="M1434.5 237.5l8 8M1442.5 237.5l-8 8" stroke="#e8e8e8" stroke-width="2.6"/><text x="23" y="247" font-size="12" fill="#f2f3f5" textLength="162" lengthAdjust="spacingAndGlyphs">Palety nástrojů - Všechny palety</text><path d="M218 240h2v8h-2zM223.2 240.5v8l-3.2-4zM224.3 240.5v8l4-4z" fill="#f2f3f5"/><path d="M236.5 239l9.5 9M246 239l-9.5 9" stroke="#f2f3f5" stroke-width="1.4"/><rect x="10" y="258" width="15" height="733" fill="#363c44"/><rect x="11" y="346" width="13" height="174" fill="#56606b"/><path d="M14.5 270l3-3 3 3" fill="none" stroke="#8a929c" stroke-width="1"/><path d="M14.5 974l3 3 3-3" fill="none" stroke="#8a929c" stroke-width="1"/><text x="66" y="290.0" font-size="11" fill="#f2f3f5" textLength="135" lengthAdjust="spacingAndGlyphs">PLYN POTRUBIE NT PODZ</text><path d="M32 285.5h3l1 2h6l1-2h3" fill="none" stroke="#e8eaee" stroke-width="1.2"/><path d="M51 284.5h11" stroke="#e8eaee" stroke-width="1.2"/><text x="66" y="332.0" font-size="11" fill="#f2f3f5" textLength="132" lengthAdjust="spacingAndGlyphs">PLYN POTRUBIE ST PODZ</text><path d="M32 327.5h3l1 2h6l1-2h3" fill="none" stroke="#e8eaee" stroke-width="1.2"/><path d="M51 326.5h11" stroke="#e8eaee" stroke-width="1.2"/><text x="66" y="374.0" font-size="11" fill="#f2f3f5" textLength="133" lengthAdjust="spacingAndGlyphs">PLYN POTRUBIE VT PODZ</text><path d="M32 369.5h3l1 2h6l1-2h3" fill="none" stroke="#e8eaee" stroke-width="1.2"/><path d="M51 368.5h11" stroke="#e8eaee" stroke-width="1.2"/><text x="66" y="416.0" font-size="11" fill="#f2f3f5" textLength="122" lengthAdjust="spacingAndGlyphs">PLYN POTRUBIE NADZ</text><path d="M32 411.5h3l1 2h6l1-2h3" fill="none" stroke="#e8eaee" stroke-width="1.2"/><path d="M51 410.5h4M58 410.5h4" stroke="#e8eaee" stroke-width="1.2"/><text x="66" y="458.0" font-size="11" fill="#f2f3f5" textLength="136" lengthAdjust="spacingAndGlyphs">PLYN POTRUBIE NT NADZ</text><path d="M32 453.5h3l1 2h6l1-2h3" fill="none" stroke="#e8eaee" stroke-width="1.2"/><path d="M51 452.5h4M58 452.5h4" stroke="#e8eaee" stroke-width="1.2"/><text x="66" y="500.0" font-size="11" fill="#f2f3f5" textLength="135" lengthAdjust="spacingAndGlyphs">PLYN POTRUBIE ST NADZ</text><path d="M32 495.5h3l1 2h6l1-2h3" fill="none" stroke="#e8eaee" stroke-width="1.2"/><path d="M51 494.5h4M58 494.5h4" stroke="#e8eaee" stroke-width="1.2"/><text x="66" y="542.0" font-size="11" fill="#f2f3f5" textLength="135" lengthAdjust="spacingAndGlyphs">PLYN POTRUBIE VT NADZ</text><path d="M32 537.5h3l1 2h6l1-2h3" fill="none" stroke="#e8eaee" stroke-width="1.2"/><path d="M51 536.5h4M58 536.5h4" stroke="#e8eaee" stroke-width="1.2"/><text x="66" y="584.0" font-size="11" fill="#f2f3f5" textLength="116" lengthAdjust="spacingAndGlyphs">_BODKOČIARKOVANÁ</text><path d="M31 579.5h5M38.5 579.5h1M41.5 579.5h5M49 579.5h1M52 579.5h5M59.5 579.5h1M62 579.5h2" stroke="#e8eaee" stroke-width="1.2"/><text x="66" y="626.0" font-size="11" fill="#f2f3f5" textLength="78" lengthAdjust="spacingAndGlyphs">PLYN ROZVOD</text><path d="M31 621.5h15M48.5 621.5h6M51.5 618.5v6M57 621.5h6" stroke="#e8eaee" stroke-width="1.2"/><text x="66" y="668.0" font-size="11" fill="#f2f3f5" textLength="142" lengthAdjust="spacingAndGlyphs">EL.VED. SLABOPRÚD PODZ</text><path d="M31 663.5h11" stroke="#e8eaee" stroke-width="1.2"/><path d="M47 663.5q3-3 6.5-0.5t6.5 0.5" fill="none" stroke="#e8eaee" stroke-width="1.1"/><text x="66" y="710.0" font-size="11" fill="#f2f3f5" textLength="120" lengthAdjust="spacingAndGlyphs">EL.VEDENIE VVN PODZ</text><path d="M31 705.5h11" stroke="#e8eaee" stroke-width="1.2"/><path d="M47 705.5q2-2 3.5-1t3 0.5M53 704.0l2 1.5-2 1.5M55.5 704.0l2 1.5-2 1.5M58 704.0l2 1.5-2 1.5" fill="none" stroke="#e8eaee" stroke-width="1.1"/><text x="66" y="752.0" font-size="11" fill="#f2f3f5" textLength="94" lengthAdjust="spacingAndGlyphs">EL.VEDENIE PODZ</text><path d="M31 747.5h11" stroke="#e8eaee" stroke-width="1.2"/><path d="M47 747.5q3-3 6.5-0.5t6.5 0.5" fill="none" stroke="#e8eaee" stroke-width="1.1"/><text x="66" y="794.0" font-size="11" fill="#f2f3f5" textLength="115" lengthAdjust="spacingAndGlyphs">EL.VEDENIE NN PODZ</text><path d="M31 789.5h11" stroke="#e8eaee" stroke-width="1.2"/><path d="M47 789.5q2-2 3.5-1t3 1h5M57 788.0l2 1.5-2 1.5" fill="none" stroke="#e8eaee" stroke-width="1.1"/><text x="66" y="836.0" font-size="11" fill="#f2f3f5" textLength="114" lengthAdjust="spacingAndGlyphs">EL.VEDENIE VN PODZ</text><path d="M31 831.5h11" stroke="#e8eaee" stroke-width="1.2"/><path d="M47 831.5q2-2 3.5-1t3 0.5M53 830.0l2 1.5-2 1.5M55.5 830.0l2 1.5-2 1.5M58 830.0l2 1.5-2 1.5" fill="none" stroke="#e8eaee" stroke-width="1.1"/><text x="66" y="878.0" font-size="11" fill="#f2f3f5" textLength="143" lengthAdjust="spacingAndGlyphs">EL.VED. SLABOPRÚD NADZ</text><path d="M31 873.5h4M38 873.5h4" stroke="#e8eaee" stroke-width="1.1"/><path d="M47 873.5q3-3 6.5-0.5t6.5 0.5" fill="none" stroke="#e8eaee" stroke-width="1.1"/><text x="66" y="920.0" font-size="11" fill="#f2f3f5" textLength="126" lengthAdjust="spacingAndGlyphs">EL.VEDENIE VVN NADZ</text><path d="M31 915.5h4M38 915.5h4" stroke="#e8eaee" stroke-width="1.1"/><path d="M47 915.5q2-2 3.5-1t3 0.5M53 914.0l2 1.5-2 1.5M55.5 914.0l2 1.5-2 1.5M58 914.0l2 1.5-2 1.5" fill="none" stroke="#e8eaee" stroke-width="1.1"/><text x="66" y="962.0" font-size="11" fill="#f2f3f5" textLength="95" lengthAdjust="spacingAndGlyphs">EL.VEDENIE NADZ</text><path d="M31 957.5h4M38 957.5h4" stroke="#e8eaee" stroke-width="1.1"/><path d="M47 957.5q3-3 6.5-0.5t6.5 0.5" fill="none" stroke="#e8eaee" stroke-width="1.1"/><path d="M255 253h22l2 2v59h-24z" fill="#515c68"/><rect x="272" y="313" width="7" height="1.3" fill="#262b31"/><g transform="translate(271.5,283.5) rotate(-90)"><text x="-24.5" y="0" font-size="11.5" fill="#f2f3f5" font-weight="bold" textLength="49" lengthAdjust="spacingAndGlyphs">Ukázky ...</text></g><path d="M255 314h22l2 2v59h-24z" fill="#515c68"/><rect x="272" y="374" width="7" height="1.3" fill="#262b31"/><g transform="translate(271.5,344.5) rotate(-90)"><text x="-23.0" y="0" font-size="11.5" fill="#f2f3f5" font-weight="bold" textLength="46" lengthAdjust="spacingAndGlyphs">Archite...</text></g><path d="M255 375h22l2 2v59h-24z" fill="#515c68"/><rect x="272" y="435" width="7" height="1.3" fill="#262b31"/><g transform="translate(271.5,405.5) rotate(-90)"><text x="-14.5" y="0" font-size="11.5" fill="#f2f3f5" font-weight="bold" textLength="29" lengthAdjust="spacingAndGlyphs">Kresli</text></g><path d="M255 436h22l2 2v59h-24z" fill="#515c68"/><rect x="272" y="496" width="7" height="1.3" fill="#262b31"/><g transform="translate(271.5,466.5) rotate(-90)"><text x="-18.0" y="0" font-size="11.5" fill="#f2f3f5" font-weight="bold" textLength="36" lengthAdjust="spacingAndGlyphs">Elektro</text></g><path d="M255 497h22l2 2v59h-24z" fill="#515c68"/><rect x="272" y="557" width="7" height="1.3" fill="#262b31"/><g transform="translate(271.5,527.5) rotate(-90)"><text x="-21.0" y="0" font-size="11.5" fill="#f2f3f5" font-weight="bold" textLength="42" lengthAdjust="spacingAndGlyphs">Šrafova...</text></g><path d="M255 558h22l2 2v59h-24z" fill="#515c68"/><rect x="272" y="618" width="7" height="1.3" fill="#262b31"/><g transform="translate(271.5,588.5) rotate(-90)"><text x="-24.0" y="0" font-size="11.5" fill="#f2f3f5" font-weight="bold" textLength="48" lengthAdjust="spacingAndGlyphs">Strojíre...</text></g><path d="M255 619h22l2 2v59h-24z" fill="#515c68"/><rect x="272" y="679" width="7" height="1.3" fill="#262b31"/><g transform="translate(271.5,649.5) rotate(-90)"><text x="-21.0" y="0" font-size="11.5" fill="#f2f3f5" font-weight="bold" textLength="42" lengthAdjust="spacingAndGlyphs">Model...</text></g><path d="M255 680h22l2 2v59h-24z" fill="#515c68"/><rect x="272" y="740" width="7" height="1.3" fill="#262b31"/><g transform="translate(271.5,710.5) rotate(-90)"><text x="-19.0" y="0" font-size="11.5" fill="#f2f3f5" font-weight="bold" textLength="38" lengthAdjust="spacingAndGlyphs">Upravit</text></g><path d="M255 741h22l2 2v59h-24z" fill="#515c68"/><rect x="272" y="801" width="7" height="1.3" fill="#262b31"/><g transform="translate(271.5,771.5) rotate(-90)"><text x="-15.5" y="0" font-size="11.5" fill="#f2f3f5" font-weight="bold" textLength="31" lengthAdjust="spacingAndGlyphs">Čiary</text></g><path d="M255 802h22l2 2v59h-24z" fill="#46505c"/><rect x="272" y="862" width="7" height="1.3" fill="#262b31"/><g transform="translate(271.5,832.5) rotate(-90)"><text x="-24.0" y="0" font-size="11.5" fill="#3db7f2" font-weight="bold" textLength="48" lengthAdjust="spacingAndGlyphs">TZB Typč</text></g><path d="M255 863h22l2 2v59h-24z" fill="#515c68"/><rect x="272" y="923" width="7" height="1.3" fill="#262b31"/><g transform="translate(271.5,893.5) rotate(-90)"><text x="-23.0" y="0" font-size="11.5" fill="#f2f3f5" font-weight="bold" textLength="46" lengthAdjust="spacingAndGlyphs">USS Blo...</text></g><path d="M255 924h22l2 2v59h-24z" fill="#515c68"/><rect x="272" y="984" width="7" height="1.3" fill="#262b31"/><g transform="translate(271.5,954.5) rotate(-90)"><text x="-19.5" y="0" font-size="11.5" fill="#f2f3f5" font-weight="bold" textLength="39" lengthAdjust="spacingAndGlyphs">USS Fu...</text></g><text x="1478" y="247" font-size="12" fill="#f2f3f5" textLength="51" lengthAdjust="spacingAndGlyphs">Vlastnosti</text><path d="M1644 240h2v8h-2zM1649.2 240.5v8l-3.2-4zM1650.3 240.5v8l4-4z" fill="#f2f3f5"/><path d="M1662.5 239l9.5 9M1672 239l-9.5 9" stroke="#f2f3f5" stroke-width="1.4"/><rect x="1466.5" y="259.5" width="134" height="23" fill="#434c5a" stroke="#56606c"/><text x="1469" y="276" font-size="12" fill="#f2f3f5" textLength="60" lengthAdjust="spacingAndGlyphs">Žádný výběr</text><path d="M1586 268h9l-4.5 5z" fill="#f2f3f5"/><rect x="1604.5" y="264.5" width="9" height="9" fill="none" stroke="#f2f3f5" stroke-width="1"/><rect x="1607.5" y="267.5" width="10" height="10" fill="#434c5a" stroke="#f2f3f5" stroke-width="1"/><path d="M1612.5 269.5v6M1609.5 272.5h6" stroke="#f0b540" stroke-width="1"/><rect x="1636" y="263" width="10" height="9" fill="#5cb8f5"/><path d="M1636 270a4 4 0 1 0 4 4" fill="none" stroke="#f2f3f5" stroke-width="1"/><path d="M1642 270l0 9 2-2 2 3 1-1-2-3h3z" fill="#f2f3f5"/><path d="M1654 264l0 10 2.5-2.5 2 4 1.5-1-2-3.5h3.5z" fill="none" stroke="#f2f3f5" stroke-width="1"/><path d="M1668 263l-5 7h3l-2 6 5-7h-3z" fill="#f5c033"/><rect x="1466" y="287" width="196" height="25" fill="#33383f"/><text x="1471" y="304" font-size="12" fill="#f2f3f5" font-weight="bold" textLength="39" lengthAdjust="spacingAndGlyphs">Obecně</text><path d="M1647 297h10l-5.0 6z" fill="#f2f3f5"/><rect x="1482.5" y="312.5" width="179" height="175" fill="none" stroke="#59626e"/><line x1="1560.5" y1="312" x2="1560.5" y2="487" stroke="#59626e"/><text x="1487" y="330.5" font-size="11.5" fill="#f2f3f5" textLength="26" lengthAdjust="spacingAndGlyphs">Barva</text><line x1="1482" y1="337.5" x2="1662" y2="337.5" stroke="#59626e"/><text x="1487" y="355.5" font-size="11.5" fill="#f2f3f5" textLength="40" lengthAdjust="spacingAndGlyphs">Hladina</text><text x="1564" y="354" font-size="11.5" fill="#f2f3f5" textLength="38" lengthAdjust="spacingAndGlyphs">20 Koty</text><line x1="1482" y1="362.5" x2="1662" y2="362.5" stroke="#59626e"/><text x="1487" y="380.5" font-size="11.5" fill="#f2f3f5" textLength="44" lengthAdjust="spacingAndGlyphs">Typ čáry</text><line x1="1482" y1="387.5" x2="1662" y2="387.5" stroke="#59626e"/><text x="1487" y="405.5" font-size="11.5" fill="#f2f3f5" textLength="68" lengthAdjust="spacingAndGlyphs">Měřítko typ...</text><text x="1564" y="404" font-size="11.5" fill="#f2f3f5" textLength="12" lengthAdjust="spacingAndGlyphs">50</text><line x1="1482" y1="412.5" x2="1662" y2="412.5" stroke="#59626e"/><text x="1487" y="430.5" font-size="11.5" fill="#f2f3f5" textLength="70" lengthAdjust="spacingAndGlyphs">Tloušťka čáry</text><line x1="1482" y1="437.5" x2="1662" y2="437.5" stroke="#59626e"/><text x="1487" y="455.5" font-size="11.5" fill="#f2f3f5" textLength="63" lengthAdjust="spacingAndGlyphs">Průhlednost</text><text x="1564" y="454" font-size="11.5" fill="#f2f3f5" textLength="40" lengthAdjust="spacingAndGlyphs">DleHlad</text><line x1="1482" y1="462.5" x2="1662" y2="462.5" stroke="#59626e"/><text x="1487" y="480.5" font-size="11.5" fill="#f2f3f5" textLength="45" lengthAdjust="spacingAndGlyphs">Tloušťka</text><text x="1564" y="479" font-size="11.5" fill="#f2f3f5" textLength="7" lengthAdjust="spacingAndGlyphs">0</text><rect x="1564.5" y="319.5" width="9" height="9" fill="#0000ff" stroke="#111"/><text x="1577" y="329" font-size="11.5" fill="#f2f3f5" textLength="40" lengthAdjust="spacingAndGlyphs">DleHlad</text><line x1="1564" y1="375.5" x2="1609" y2="375.5" stroke="#f2f3f5"/><text x="1614" y="379" font-size="11.5" fill="#f2f3f5" textLength="40" lengthAdjust="spacingAndGlyphs">DleHlad</text><line x1="1564" y1="425.5" x2="1609" y2="425.5" stroke="#f2f3f5"/><text x="1614" y="429" font-size="11.5" fill="#f2f3f5" textLength="40" lengthAdjust="spacingAndGlyphs">DleHlad</text><rect x="1466" y="492" width="196" height="25" fill="#33383f"/><text x="1471" y="509" font-size="12" fill="#f2f3f5" font-weight="bold" textLength="44" lengthAdjust="spacingAndGlyphs">Zobrazit</text><path d="M1647 502h10l-5.0 6z" fill="#f2f3f5"/><rect x="1482.5" y="517.5" width="179" height="125" fill="none" stroke="#59626e"/><line x1="1560.5" y1="517" x2="1560.5" y2="642" stroke="#59626e"/><text x="1487" y="535.5" font-size="11.5" fill="#f2f3f5" textLength="42" lengthAdjust="spacingAndGlyphs">Střed X</text><text x="1564" y="534" font-size="11.5" fill="#b4bac3" textLength="52" lengthAdjust="spacingAndGlyphs">5976.6089</text><line x1="1482" y1="542.5" x2="1662" y2="542.5" stroke="#59626e"/><text x="1487" y="560.5" font-size="11.5" fill="#f2f3f5" textLength="42" lengthAdjust="spacingAndGlyphs">Střed Y</text><text x="1564" y="559" font-size="11.5" fill="#b4bac3" textLength="55" lengthAdjust="spacingAndGlyphs">-1021.0847</text><line x1="1482" y1="567.5" x2="1662" y2="567.5" stroke="#59626e"/><text x="1487" y="585.5" font-size="11.5" fill="#f2f3f5" textLength="42" lengthAdjust="spacingAndGlyphs">Střed Z</text><text x="1564" y="584" font-size="11.5" fill="#b4bac3" textLength="7" lengthAdjust="spacingAndGlyphs">0</text><line x1="1482" y1="592.5" x2="1662" y2="592.5" stroke="#59626e"/><text x="1487" y="610.5" font-size="11.5" fill="#f2f3f5" textLength="36" lengthAdjust="spacingAndGlyphs">Výška</text><text x="1564" y="609" font-size="11.5" fill="#b4bac3" textLength="51" lengthAdjust="spacingAndGlyphs">8051.2584</text><line x1="1482" y1="617.5" x2="1662" y2="617.5" stroke="#59626e"/><text x="1487" y="635.5" font-size="11.5" fill="#f2f3f5" textLength="33" lengthAdjust="spacingAndGlyphs">Šířka</text><text x="1564" y="634" font-size="11.5" fill="#b4bac3" textLength="58" lengthAdjust="spacingAndGlyphs">19639.2453</text><rect x="1466" y="647" width="196" height="25" fill="#33383f"/><text x="1471" y="664" font-size="12" fill="#f2f3f5" font-weight="bold" textLength="33" lengthAdjust="spacingAndGlyphs">Různé</text><path d="M1647 657h10l-5.0 6z" fill="#f2f3f5"/><rect x="1482.5" y="672.5" width="179" height="150" fill="none" stroke="#59626e"/><line x1="1560.5" y1="672" x2="1560.5" y2="822" stroke="#59626e"/><text x="1487" y="690.5" font-size="11.5" fill="#f2f3f5" textLength="72" lengthAdjust="spacingAndGlyphs">Poznámkové...</text><text x="1564" y="689" font-size="11.5" fill="#f2f3f5" textLength="16" lengthAdjust="spacingAndGlyphs">1:1</text><line x1="1482" y1="697.5" x2="1662" y2="697.5" stroke="#59626e"/><text x="1487" y="715.5" font-size="11.5" fill="#f2f3f5" textLength="72" lengthAdjust="spacingAndGlyphs">USS ikona a...</text><text x="1564" y="714" font-size="11.5" fill="#f2f3f5" textLength="20" lengthAdjust="spacingAndGlyphs">Ano</text><line x1="1482" y1="722.5" x2="1662" y2="722.5" stroke="#59626e"/><text x="1487" y="740.5" font-size="11.5" fill="#f2f3f5" textLength="72" lengthAdjust="spacingAndGlyphs">Ikona USS v ...</text><text x="1564" y="739" font-size="11.5" fill="#f2f3f5" textLength="20" lengthAdjust="spacingAndGlyphs">Ano</text><line x1="1482" y1="747.5" x2="1662" y2="747.5" stroke="#59626e"/><text x="1487" y="765.5" font-size="11.5" fill="#f2f3f5" textLength="72" lengthAdjust="spacingAndGlyphs">USS zvlášť p...</text><text x="1564" y="764" font-size="11.5" fill="#f2f3f5" textLength="20" lengthAdjust="spacingAndGlyphs">Ano</text><line x1="1482" y1="772.5" x2="1662" y2="772.5" stroke="#59626e"/><text x="1487" y="790.5" font-size="11.5" fill="#f2f3f5" textLength="56" lengthAdjust="spacingAndGlyphs">Název USS</text><line x1="1482" y1="797.5" x2="1662" y2="797.5" stroke="#59626e"/><text x="1487" y="815.5" font-size="11.5" fill="#f2f3f5" textLength="72" lengthAdjust="spacingAndGlyphs">Styl zobrazení</text><text x="1564" y="814" font-size="11.5" fill="#f2f3f5" textLength="92" lengthAdjust="spacingAndGlyphs">2D Drátový Model</text><path d="M300 867.5h14M300 872h14M300 876.5h14" stroke="#f2f3f5" stroke-width="1.6"/><path d="M330 882L340 862H404L394.5 882z" fill="#4c5d78"/><text x="350" y="876.5" font-size="12" fill="#f2f3f5" font-weight="bold" textLength="34" lengthAdjust="spacingAndGlyphs">Model</text><text x="414" y="876.5" font-size="12" fill="#f2f3f5" textLength="41" lengthAdjust="spacingAndGlyphs">Layout1</text><path d="M470 880l4-12M542 880l4-12M567 880l4-12" stroke="#5a6472" stroke-width="1"/><text x="486" y="876.5" font-size="12" fill="#f2f3f5" textLength="42" lengthAdjust="spacingAndGlyphs">Layout2</text><path d="M557 866.5v11M551.5 872h11" stroke="#f2f3f5" stroke-width="1.6"/><path d="M294 891l6 6M300 891l-6 6" stroke="#6e7782" stroke-width="1.3"/><text x="308" y="900" font-size="13" fill="#e4e6ea" font-family="Liberation Mono" textLength="232" lengthAdjust="spacingAndGlyphs">V_ST, ST_KOTY_ROZST_KOTY_ROZD</text><text x="308" y="916" font-size="13" fill="#e4e6ea" font-family="Liberation Mono" textLength="423" lengthAdjust="spacingAndGlyphs">:: USS - Urob si sám ! | Verzia 1.0 | TECHSOFT s.r.o.</text><text x="308" y="932" font-size="13" fill="#e4e6ea" font-family="Liberation Mono" textLength="352" lengthAdjust="spacingAndGlyphs">:: Utilita uľahčujúca prispôsobovanie ZWCAD+</text><text x="308" y="948" font-size="13" fill="#e4e6ea" font-family="Liberation Mono" textLength="55" lengthAdjust="spacingAndGlyphs">Příkaz:</text><text x="308" y="964" font-size="13" fill="#e4e6ea" font-family="Liberation Mono" textLength="55" lengthAdjust="spacingAndGlyphs">Příkaz:</text><rect x="308" y="972" width="1145" height="1.5" fill="#59616c"/><text x="308" y="987" font-size="13" fill="#e4e6ea" font-family="Liberation Mono" textLength="55" lengthAdjust="spacingAndGlyphs">Příkaz:</text><rect x="374" y="975" width="1" height="14" fill="#e4e6ea"/><rect x="1443" y="887" width="10" height="85" fill="#383c43"/><rect x="1445" y="943" width="8" height="12" fill="#5a626d"/><path d="M1445 899l3.5-3 3.5 3M1445 961l3.5 3 3.5-3" fill="none" stroke="#8a929c" stroke-width="1"/><text x="14" y="1012" font-size="10.5" fill="#e8eaee" font-family="Liberation Mono" textLength="180" lengthAdjust="spacingAndGlyphs">10992.7714, -1783.0334, 0.0000</text><rect x="14" y="1016" width="180" height="1" fill="#59616c" opacity=".0"/><rect x="338.5" y="997.5" width="19" height="19.5" fill="#45536a" stroke="#4aa8e8" stroke-width="1"/><rect x="362.5" y="997.5" width="19" height="19.5" fill="#45536a" stroke="#4aa8e8" stroke-width="1"/><rect x="386.5" y="997.5" width="19" height="19.5" fill="#45536a" stroke="#4aa8e8" stroke-width="1"/><rect x="434.5" y="997.5" width="19" height="19.5" fill="#45536a" stroke="#4aa8e8" stroke-width="1"/><rect x="458.5" y="997.5" width="19" height="19.5" fill="#45536a" stroke="#4aa8e8" stroke-width="1"/><rect x="482.5" y="997.5" width="19" height="19.5" fill="#45536a" stroke="#4aa8e8" stroke-width="1"/><rect x="578.5" y="997.5" width="19" height="19.5" fill="#45536a" stroke="#4aa8e8" stroke-width="1"/><rect x="268.5" y="1000.5" width="4" height="4" fill="none" stroke="#f2f3f5" stroke-width="1"/><rect x="268.5" y="1005.5" width="4" height="4" fill="none" stroke="#f2f3f5" stroke-width="1"/><rect x="268.5" y="1010.5" width="4" height="4" fill="none" stroke="#f2f3f5" stroke-width="1"/><rect x="273.5" y="1000.5" width="4" height="4" fill="none" stroke="#f2f3f5" stroke-width="1"/><rect x="273.5" y="1005.5" width="4" height="4" fill="none" stroke="#f2f3f5" stroke-width="1"/><rect x="273.5" y="1010.5" width="4" height="4" fill="none" stroke="#f2f3f5" stroke-width="1"/><rect x="278.5" y="1000.5" width="4" height="4" fill="none" stroke="#f2f3f5" stroke-width="1"/><rect x="278.5" y="1005.5" width="4" height="4" fill="none" stroke="#f2f3f5" stroke-width="1"/><rect x="278.5" y="1010.5" width="4" height="4" fill="none" stroke="#f2f3f5" stroke-width="1"/><rect x="282" y="1000" width="2" height="15" fill="#5cb8f5"/><rect x="268" y="1013" width="16" height="2" fill="#5cb8f5"/><rect x="293.5" y="1000.5" width="14" height="14" fill="none" stroke="#f2f3f5" stroke-width="1.4"/><path d="M298 1001v13M303 1001v13M294 1005h13M294 1010h13" stroke="#5cb8f5" stroke-width="1.2"/><path d="M317.5 1000v14h14" fill="none" stroke="#f2f3f5" stroke-width="1.3"/><rect x="318" y="1008" width="5" height="5" fill="none" stroke="#5cb8f5" stroke-width="1.1"/><circle cx="346.5" cy="1008" r="6" fill="none" stroke="#f2f3f5" stroke-width="1.3"/><path d="M346.5 1008l7-7M350 1004h4" stroke="#5cb8f5" stroke-width="1.1"/><rect x="366.5" y="1001.5" width="12" height="12" fill="none" stroke="#f2f3f5" stroke-width="1.4"/><rect x="365.5" y="1000.5" width="4" height="4" fill="none" stroke="#e74c3c" stroke-width="1"/><path d="M389 1014h14M389 1014l12-11" stroke="#f2f3f5" stroke-width="1.2"/><rect x="394.5" y="1007" width="2.5" height="2.5" fill="#5cb8f5"/><path d="M415 1000v14h12M413 1002l2-2 2 2M415 1014l4-4" fill="none" stroke="#f2f3f5" stroke-width="1.1"/><path d="M425 1000l-3 5h3l-2 4 4-5h-3z" fill="#f5c033"/><path d="M441 1001v7M437.5 1004.5h7" stroke="#f2f3f5" stroke-width="1.4"/><rect x="442.5" y="1008.5" width="8" height="4" fill="none" stroke="#5cb8f5" stroke-width="1.2"/><path d="M461 1002.5h13M461 1007h13M461 1011.5h13" stroke="#f2f3f5" stroke-width="2"/><rect x="485.5" y="1000.5" width="14" height="14" fill="none" stroke="#f2f3f5" stroke-width="1.3"/><rect x="488" y="1003" width="9" height="9" fill="#5cb8f5" opacity=".8"/><rect x="509.5" y="1000.5" width="12" height="14" fill="none" stroke="#f2f3f5" stroke-width="1.2"/><path d="M511 1003h9M512 1006h1M514 1006h6M512 1009h1M514 1009h6M512 1012h1M514 1012h6" stroke="#f2f3f5" stroke-width="1"/><path d="M536 1000v7M532.5 1003.5h7" stroke="#f2f3f5" stroke-width="1.3"/><rect x="539.5" y="1007.5" width="4" height="4" fill="#5cb8f5"/><rect x="541.5" y="1009.5" width="4.5" height="4.5" fill="none" stroke="#5cb8f5" stroke-width="1"/><path d="M556 1002h16M556 1012.5h16M556 1015h16" stroke="#f2f3f5" stroke-width="1.2"/><path d="M556 1007h16" stroke="#5cb8f5" stroke-width="1" stroke-dasharray="2 1"/><rect x="585.5" y="1000.5" width="9" height="9" fill="none" stroke="#f2f3f5" stroke-width="1"/><rect x="581.5" y="1004.5" width="9" height="9" fill="none" stroke="#5cb8f5" stroke-width="1" stroke-dasharray="1.5 1"/><path d="M590 1014h4v-3" fill="none" stroke="#f5c033" stroke-width="1"/><rect x="1374" y="1001" width="14" height="11" fill="none" stroke="#5cb8f5" stroke-width="1.2"/><path d="M1374 999v15M1388 999v15" stroke="#5cb8f5" stroke-width="1"/><text x="1375.5" y="1010" font-size="11" fill="#5cb8f5" font-family="Liberation Mono" textLength="12" lengthAdjust="spacingAndGlyphs">0.0</text><text x="1392" y="1009" font-size="11" fill="#b8bcc2" font-family="Liberation Mono" textLength="54" lengthAdjust="spacingAndGlyphs">Milimetry</text><path d="M1451 1002h9l-4.5 5z" fill="#f2f3f5"/><path d="M1477 999l3 9 5 6-8-3-8 3 5-6z" fill="#5cb8f5" stroke="#2a5a8a" stroke-width=".5"/><text x="1488" y="1009" font-size="11" fill="#b8bcc2" font-family="Liberation Mono" textLength="18" lengthAdjust="spacingAndGlyphs">1:1</text><path d="M1511 1002h9l-4.5 5z" fill="#f2f3f5"/><path d="M1536 999l3 9 5 6-8-3-8 3 5-6z" fill="#5cb8f5" stroke="#2a5a8a" stroke-width=".5"/><circle cx="1542.5" cy="1010.5" r="2.5" fill="#f5c033"/><path d="M1558 999l3 9 5 6-8-3-8 3 5-6z" fill="#5cb8f5" stroke="#2a5a8a" stroke-width=".5"/><path d="M1556 1003l3-3M1559 1006l3-3" stroke="#c8d4e4" stroke-width="1"/><rect x="1573.5" y="1004.5" width="7" height="6" fill="none" stroke="#f2f3f5" stroke-width="1.1"/><circle cx="1585" cy="1003.5" r="4.5" fill="none" stroke="#f2f3f5" stroke-width="1.1"/><path d="M1582 1011l3-3 3 3-3 3z" fill="none" stroke="#f2f3f5" stroke-width="1"/><g transform="translate(1602,1007)"><circle r="4" fill="none" stroke="#5cb8f5" stroke-width="2.4"/><rect x="-1.2" y="-7" width="2.4" height="3" fill="#5cb8f5" transform="rotate(0)"/><rect x="-1.2" y="-7" width="2.4" height="3" fill="#5cb8f5" transform="rotate(45)"/><rect x="-1.2" y="-7" width="2.4" height="3" fill="#5cb8f5" transform="rotate(90)"/><rect x="-1.2" y="-7" width="2.4" height="3" fill="#5cb8f5" transform="rotate(135)"/><rect x="-1.2" y="-7" width="2.4" height="3" fill="#5cb8f5" transform="rotate(180)"/><rect x="-1.2" y="-7" width="2.4" height="3" fill="#5cb8f5" transform="rotate(225)"/><rect x="-1.2" y="-7" width="2.4" height="3" fill="#5cb8f5" transform="rotate(270)"/><rect x="-1.2" y="-7" width="2.4" height="3" fill="#5cb8f5" transform="rotate(315)"/></g><rect x="1618.5" y="1002.5" width="13" height="10" fill="none" stroke="#f2f3f5" stroke-width="1.3"/><path d="M1620 1000v2.5M1623 1000v2.5M1626 1000v2.5M1629 1000v2.5M1620 1012.5v2.5M1623 1012.5v2.5M1626 1012.5v2.5M1629 1012.5v2.5" stroke="#f2f3f5" stroke-width="1"/><path d="M1626 1004l-3 3.5h3l-2 3.5" fill="none" stroke="#aab" stroke-width="1"/><path d="M1640 1005v-5h5M1640 1000l5 5M1654 1005v-5h-5M1654 1000l-5 5M1640 1009v5h5M1640 1014l5-5M1654 1009v5h-5M1654 1014l-5-5" fill="none" stroke="#f2f3f5" stroke-width="1.2"/><path d="M1662 1001h14M1662 1007h14M1662 1013h14" stroke="#5cb8f5" stroke-width="2"/><rect x="13" y="1017.5" width="249" height="1" fill="#5a626c"/><defs>
<clipPath id="vpc"><rect x="286" y="228" width="1168" height="634"/></clipPath>
<pattern id="chk" width="2" height="2" patternUnits="userSpaceOnUse"><rect width="2" height="2" fill="#1d232a"/><rect width="1" height="1" fill="#f2a383"/><rect x="1" y="1" width="1" height="1" fill="#f2a383"/></pattern>
<pattern id="bl1" width="10" height="10" patternUnits="userSpaceOnUse"><path d="M0 0L10 10M-1 9L1 11M9 -1L11 1" stroke="#12161b" stroke-width="1" shape-rendering="crispEdges"/></pattern>
<pattern id="bl2" width="10" height="10" patternUnits="userSpaceOnUse" patternTransform="translate(1 0)"><path d="M0 10L10 0M-1 1L1 -1M9 11L11 9" stroke="#12161b" stroke-width="1" shape-rendering="crispEdges"/></pattern>
<pattern id="cc1" width="17" height="17" patternUnits="userSpaceOnUse"><path d="M-1 18L18 -1M2 18L18 2M-1 4L4 -1" stroke="#5aaac8" stroke-width="1" shape-rendering="crispEdges"/><circle cx="5.5" cy="4.5" r="2" fill="none" stroke="#5aaac8" stroke-width="1"/><rect x="12.3" y="11.5" width="2.4" height="3.4" fill="none" stroke="#5aaac8" stroke-width=".9"/></pattern>
<pattern id="cc2" width="17" height="17" patternUnits="userSpaceOnUse"><path d="M-1 -1L18 18M-1 2L15 18M14 -1L18 3" stroke="#5aaac8" stroke-width="1" shape-rendering="crispEdges"/><circle cx="4.5" cy="12.5" r="2" fill="none" stroke="#5aaac8" stroke-width="1"/><circle cx="12.5" cy="4.5" r="2" fill="none" stroke="#5aaac8" stroke-width="1"/></pattern>
<pattern id="cc3" width="14" height="14" patternUnits="userSpaceOnUse" patternTransform="translate(0 695.5)"><path d="M-1 15L15 -1" stroke="#5aaac8" stroke-width="1" shape-rendering="crispEdges"/><circle cx="6.5" cy="3" r="2" fill="none" stroke="#5aaac8" stroke-width="1"/><rect x="9.5" y="8.5" width="3" height="3" fill="none" stroke="#5aaac8" stroke-width="1"/><path d="M3.5 5.5L5 4" stroke="#5aaac8" stroke-width="1"/></pattern>
<pattern id="cc4" width="7" height="7" patternUnits="userSpaceOnUse"><circle cx="2.5" cy="2.5" r="2" fill="none" stroke="#5aaac8" stroke-width="1"/><circle cx="5.5" cy="5.5" r="2" fill="none" stroke="#5aaac8" stroke-width="1"/><path d="M3 3L4.5 4.5M6.5 1L7 0.5M0 6.5L1 5.5" stroke="#5aaac8" stroke-width=".9"/></pattern>
<pattern id="mh" width="4.5" height="4.5" patternUnits="userSpaceOnUse" patternTransform="rotate(45)"><rect width="4.5" height=".8" fill="#ff00ff"/></pattern>
</defs><g clip-path="url(#vpc)" shape-rendering="crispEdges"><rect x="362" y="428" width="751" height="13.5" fill="url(#chk)"/><rect x="362" y="428" width="14.5" height="434" fill="url(#chk)"/><rect x="1100.5" y="428" width="12.5" height="434" fill="url(#chk)"/><rect x="376.5" y="428" width="723.5" height="13.5" fill="url(#bl1)"/><rect x="362" y="428" width="14.5" height="434" fill="url(#bl2)"/><rect x="1100.5" y="441" width="12.5" height="421" fill="url(#bl2)"/><rect x="454.5" y="428" width="79" height="13.5" fill="#212830"/><rect x="376.5" y="441.5" width="702.5" height="20.5" fill="url(#cc1)"/><rect x="376.5" y="462" width="20.5" height="400" fill="url(#cc2)"/><rect x="1079" y="462" width="21.5" height="400" fill="url(#cc2)"/><rect x="455" y="441.5" width="78.5" height="20.5" fill="#212830"/><rect x="638" y="467" width="7.5" height="227" fill="url(#cc4)"/><rect x="638" y="695.5" width="436" height="14.5" fill="url(#cc3)"/><path d="M359.5 870V427Q359.5 425.5 361 425.5H1115.5V870" fill="none" stroke="#00f5b8" stroke-width="5"/><path d="M376.5 862V441.5H454.5V428M533.5 428V441.5H1100.5V862" fill="none" stroke="#ff0000" stroke-width="1.2"/><path d="M1079 465.5H1100.5M533.5 441.5V462M1078 695.5V710" stroke="#ffffff" stroke-width="1"/><rect x="455.5" y="441.5" width="78" height="7" fill="none" stroke="#1e90ff" stroke-width="1"/><path d="M455.5 448v14" stroke="#1e90ff" stroke-width="1"/><circle cx="458.5" cy="445.3" r="2.6" fill="none" stroke="#1e90ff" stroke-width="1"/><circle cx="530" cy="445.3" r="2.6" fill="none" stroke="#1e90ff" stroke-width="1"/><path d="M456.8 443.5l3.4 3.6M460.2 443.5l-3.4 3.6M528.3 443.5l3.4 3.6M531.7 443.5l-3.4 3.6" stroke="#1e90ff" stroke-width=".8"/><path d="M399.7 870V464.6H635.8V712.4H1076.6V870" fill="none" stroke="#f8bd78" stroke-width="4.6" stroke-linejoin="round"/><path d="M647.8 660.5V464.6H1076.6V693.6H681" fill="none" stroke="#f8bd78" stroke-width="4.4" stroke-linejoin="round"/><path d="M647.8 660.5H681.5" stroke="#f8bd78" stroke-width="3"/><rect x="377" y="465" width="20.5" height="39" fill="#212830"/><rect x="377" y="465" width="20.5" height="39" fill="url(#mh)"/><rect x="376.5" y="465.5" width="21" height="38.5" fill="none" stroke="#ffffff" stroke-width="1.1"/><path d="M358 353.5H1117" stroke="#0000ff" stroke-width="1.6"/><path d="M358.5 349v18M1116.5 349v18M355 358l7-8M1113 358l7-8" stroke="#0000ff" stroke-width="1.2"/><text x="722" y="352.5" font-size="15" fill="#0000ff" textLength="30" lengthAdjust="spacingAndGlyphs">9600</text><path d="M454 375H534M454.5 371v19M533.5 371v19M451 379l6-6M531 378l6-6" stroke="#0000ff" stroke-width="1.3"/><text x="482" y="373.5" font-size="14" fill="#0000ff" textLength="25" lengthAdjust="spacingAndGlyphs">1000</text><text x="466" y="387.5" font-size="14" fill="#0000ff" textLength="57" lengthAdjust="spacingAndGlyphs">1500(900)</text><rect x="484.5" y="393.5" width="20.5" height="26.5" rx="3" fill="none" stroke="#ff00ff" stroke-width="1.1"/><path d="M484.5 407H505M494.7 420V442" stroke="#ff00ff" stroke-width="1.1"/><text x="486.5" y="405.5" font-size="12.5" fill="#ff00ff" textLength="16" lengthAdjust="spacingAndGlyphs">OK</text><text x="488" y="418.5" font-size="12.5" fill="#ff00ff" textLength="13" lengthAdjust="spacingAndGlyphs">01</text><rect x="615.5" y="377.5" width="14.5" height="27" rx="3" fill="none" stroke="#9a40b0" stroke-width="1.1"/><path d="M615.5 391.5H630M622.7 404.5V425" stroke="#9a40b0" stroke-width="1.1"/><text x="616.5" y="390" font-size="13" fill="#9a40b0" textLength="12.5" lengthAdjust="spacingAndGlyphs">ST</text><text x="617" y="403" font-size="13" fill="#9a40b0" textLength="12" lengthAdjust="spacingAndGlyphs">01</text><path d="M399.5 466V370M399.5 465.5H495" stroke="#ffffff" stroke-width="1.2"/><path d="M393 389L399.5 370L406 389M476 459L495 465.5L476 472" fill="none" stroke="#ffffff" stroke-width="1.1"/><rect x="391.5" y="457.5" width="16" height="16" fill="none" stroke="#ffffff" stroke-width="1.1"/><path d="M512 455l14 20M526 455l-14 20" stroke="#ffffff" stroke-width="1.1"/><path d="M393 337l6.5 9 6.5-9M399.5 346v7" fill="none" stroke="#ffffff" stroke-width="1.1"/><path d="M485.5 498.5h31v3h-31zM516.5 496.5h12.5v7h-12.5zM529 497.5h58v5h-58zM590 498.5h29.5v3h-29.5zM586.5 478.5h3v43h-3z" fill="none" stroke="#8000ff" stroke-width="1.1"/><path d="M536 486.5h8.5v11M544.5 502.5v11h7.5M588 492v16" fill="none" stroke="#8000ff" stroke-width="1.1"/><rect x="647.5" y="465.5" width="87" height="47" fill="none" stroke="#ff0000" stroke-width="1.1"/><path d="M654.5 469.5H727.5L730.5 472.5V505.5L727.5 508.5H654.5L651.5 505.5V472.5Z" fill="none" stroke="#ff0000" stroke-width="1"/><rect x="653.5" y="474.5" width="28.5" height="32.5" rx="4" fill="none" stroke="#ff0000" stroke-width="1"/><rect x="660.5" y="470.5" width="13.5" height="3" fill="none" stroke="#ff0000" stroke-width="1"/><rect x="666.5" y="471.5" width="2" height="13" fill="none" stroke="#ff0000" stroke-width="1"/><circle cx="667.5" cy="490.5" r="2" fill="none" stroke="#ff0000"/><path d="M683 478.5H730" stroke="#ff0000" stroke-width="1"/><path d="M683 482.5H730" stroke="#ff0000" stroke-width="1"/><path d="M683 486.5H730" stroke="#ff0000" stroke-width="1"/><path d="M683 490.5H730" stroke="#ff0000" stroke-width="1"/><path d="M683 494.5H730" stroke="#ff0000" stroke-width="1"/><path d="M683 498.5H730" stroke="#ff0000" stroke-width="1"/><path d="M683 502.5H730" stroke="#ff0000" stroke-width="1"/><rect x="734.5" y="465.5" width="55" height="47" fill="none" stroke="#ff8c00" stroke-width="1.1"/><path d="M638 465.5H645" stroke="#ffffff" stroke-width="1"/><path d="M1025.5 467V692M1029.5 467V692M1053.5 472V690" stroke="#ff8c00" stroke-width="1"/><path d="M1035 474.5H1072" stroke="#ff8c00" stroke-width="1"/><path d="M1035 484.5H1072" stroke="#ff8c00" stroke-width="1"/><path d="M1035 496.5h8l8-1.5h8l6-1.5h7" fill="none" stroke="#ff8c00" stroke-width="1"/><path d="M1035 504.5H1072" stroke="#ff8c00" stroke-width="1"/><path d="M1035 514.5H1072" stroke="#ff8c00" stroke-width="1"/><path d="M1035 526.5h8l8-1.5h8l6-1.5h7" fill="none" stroke="#ff8c00" stroke-width="1"/><path d="M1035 534.5H1072" stroke="#ff8c00" stroke-width="1"/><path d="M1035 544.5H1072" stroke="#ff8c00" stroke-width="1"/><path d="M1035 556.5h8l8-1.5h8l6-1.5h7" fill="none" stroke="#ff8c00" stroke-width="1"/><path d="M1035 564.5H1072" stroke="#ff8c00" stroke-width="1"/><path d="M1035 574.5H1072" stroke="#ff8c00" stroke-width="1"/><path d="M1035 586.5h8l8-1.5h8l6-1.5h7" fill="none" stroke="#ff8c00" stroke-width="1"/><path d="M1035 594.5H1072" stroke="#ff8c00" stroke-width="1"/><path d="M1035 604.5H1072" stroke="#ff8c00" stroke-width="1"/><path d="M1035 616.5h8l8-1.5h8l6-1.5h7" fill="none" stroke="#ff8c00" stroke-width="1"/><path d="M1035 624.5H1072" stroke="#ff8c00" stroke-width="1"/><path d="M1035 634.5H1072" stroke="#ff8c00" stroke-width="1"/><path d="M1035 646.5h8l8-1.5h8l6-1.5h7" fill="none" stroke="#ff8c00" stroke-width="1"/><path d="M1035 654.5H1072" stroke="#ff8c00" stroke-width="1"/><path d="M1035 664.5H1072" stroke="#ff8c00" stroke-width="1"/><path d="M1035 676.5h8l8-1.5h8l6-1.5h7" fill="none" stroke="#ff8c00" stroke-width="1"/><path d="M1035 684.5H1072" stroke="#ff8c00" stroke-width="1"/><path d="M650 553A60 60 0 0 1 710 612" fill="none" stroke="#1e90ff" stroke-width="1"/><path d="M650 611.5H710M650 614.5H710M641 550.5H650M641 553.5H650M641 609.5H650M641 612.5H650" stroke="#1e90ff" stroke-width="1"/><path d="M692 605h6v9h-6" fill="none" stroke="#1e90ff" stroke-width="1"/><rect x="670" y="568" width="23" height="14" fill="#a0a0a8"/><text x="670.5" y="581.5" font-size="16" fill="#ff00ff" textLength="22" lengthAdjust="spacingAndGlyphs">700</text><text x="670" y="595" font-size="14" fill="#ff00ff" textLength="27" lengthAdjust="spacingAndGlyphs">1970</text><path d="M650 583H718" stroke="#ff00ff" stroke-width="1.1"/><rect x="718.5" y="575.5" width="28.5" height="15" rx="3" fill="none" stroke="#ff00ff" stroke-width="1.1"/><path d="M732.5 575.5v15" stroke="#ff00ff" stroke-width="1.1"/><text x="720.5" y="589" font-size="15" fill="#ff00ff" textLength="10" lengthAdjust="spacingAndGlyphs">D</text><text x="734" y="589" font-size="15" fill="#ff00ff" textLength="12" lengthAdjust="spacingAndGlyphs">01</text><path d="M601.5 548v67M599 548h10M599 615h10M597 552l8-8M597 619l8-8" stroke="#0000ff" stroke-width="1.2"/><g transform="translate(603,592) rotate(-90)"><text x="0" y="0" font-size="14" fill="#0000ff" textLength="19" lengthAdjust="spacingAndGlyphs">800</text></g><text x="803" y="575.5" font-size="27" fill="#0000ff" textLength="37" lengthAdjust="spacingAndGlyphs">1.01</text><text x="808" y="587.5" font-size="13.5" fill="#ff00ff" textLength="33" lengthAdjust="spacingAndGlyphs">15.65m²</text><rect x="823" y="586" width="23" height="2" fill="#87cefa"/><rect x="837" y="575" width="4" height="2" fill="#87cefa"/><text x="586" y="830" font-size="25" fill="#0000ff" textLength="38" lengthAdjust="spacingAndGlyphs">1.02</text><text x="591" y="843.5" font-size="13.5" fill="#ff00ff" textLength="35" lengthAdjust="spacingAndGlyphs">39.98m²</text><rect x="607" y="844" width="12" height="3" fill="#87cefa"/><rect x="620" y="844" width="4" height="3" fill="#87cefa"/><rect x="626" y="844" width="4" height="3" fill="#87cefa"/><rect x="620" y="831" width="4" height="2" fill="#87cefa"/><rect x="495.5" y="679.5" width="41" height="14" fill="none" stroke="#0000ff" stroke-width="1.1"/><text x="497" y="693" font-size="15" fill="#0000ff" textLength="40" lengthAdjust="spacingAndGlyphs">±0,000</text><rect x="679.5" y="681.5" width="71" height="12" fill="none" stroke="#ff0000" stroke-width="1.2"/><path d="M702.5 681V662M727 681V662" stroke="#ff0000" stroke-width="1.1"/><ellipse cx="714.5" cy="657" rx="14.5" ry="17.5" fill="none" stroke="#ff0000" stroke-width="1.1"/><ellipse cx="714.5" cy="657" rx="11" ry="15" fill="none" stroke="#ff0000" stroke-width="1"/><path d="M710 669v-4a4.5 4.5 0 0 1 9 0v4z" fill="none" stroke="#ff0000" stroke-width="1"/><rect x="649.5" y="661.5" width="31" height="31" fill="none" stroke="#ffffff" stroke-width="1.2"/><rect x="652.5" y="664.5" width="25" height="25" fill="none" stroke="#ffffff" stroke-width="1"/><circle cx="664.5" cy="676.5" r="8" fill="none" stroke="#ffffff" stroke-width="1.6"/><circle cx="664.5" cy="676.5" r="10.5" fill="none" stroke="#ffffff" stroke-width="1" stroke-dasharray="3 2"/><path d="M783.5 870V713.5H929.5V870" fill="none" stroke="#ff8c00" stroke-width="1.1"/><rect x="795.5" y="724.5" width="53.5" height="36" fill="none" stroke="#ff8c00" stroke-width="1.1"/><rect x="864.5" y="724.5" width="53.5" height="36" fill="none" stroke="#ff8c00" stroke-width="1.1"/><path d="M791.5 870V760.5H905.5L922 776.5V870M905.5 760.5V776.5H922" fill="none" stroke="#ff8c00" stroke-width="1.1"/><path d="M682.5 820V784H690" fill="none" stroke="#0000ff" stroke-width="1.1"/><path d="M678 805l4.5 14 4.5-14M680 808l2.5 11 2.5-11" fill="none" stroke="#0000ff" stroke-width="1"/><text x="690" y="790" font-size="13.5" fill="#0000ff" textLength="50" lengthAdjust="spacingAndGlyphs">svetlovod</text><circle cx="681.5" cy="831" r="12" fill="none" stroke="#20b080" stroke-width="1.1"/><rect x="998.5" y="693.5" width="12" height="19.5" fill="none" stroke="#60a830" stroke-width="1.1"/><path d="M1005 713L1027 745H1033" fill="none" stroke="#60a830" stroke-width="1"/><text x="1033" y="750.5" font-size="14" fill="#60a830" textLength="24" lengthAdjust="spacingAndGlyphs">SU.01</text><path d="M1003 770.5H1077M1004.5 760v17M1077 756v17M1000 774l7-7M1074 774l6-6" stroke="#60a830" stroke-width="1.1"/><text x="1030" y="768" font-size="14" fill="#60a830" textLength="22" lengthAdjust="spacingAndGlyphs">925</text><path d="M1118 718.5H1160" stroke="#9a40b0" stroke-width="1.1"/><rect x="1160.5" y="712.5" width="28" height="13.5" rx="3" fill="none" stroke="#9a40b0" stroke-width="1.1"/><text x="1161.5" y="725" font-size="15.5" fill="#9a40b0" textLength="25" lengthAdjust="spacingAndGlyphs">ST01</text><path d="M286.4 433L290.5 416M286.4 440.6L291 434L298.6 422.3M286.4 449L291.3 443.5L296 442L301.6 442.6M291 443.5L287 441M298 442L303.6 436.5L309.5 433M302 441.5L308 439L313 437M286.5 467L293 461.5L303 456L319.6 448.3M291 465L300 461L322 453.5M288 469L295 467.5L307 462L314.5 461L317 462H325M316 460.5L318 459H324M286 469.5L295 470.5H315L326 469.3M286 492.5L298 488L311 484L314 480L322 478L326 475M322 478L327 479.5M311.5 484.5H327.5M313 485L322 490L327 493M286 494.5L300 496H326M300 496L318 508M309 496.7L326 505M316 499H326M286 504L291 508.5L299 510L320 517M291 508.5L297 520L301 530V543M286 511L299 525L312 530M299 510L317 520M310 518L318 521M301 530L306 526L310 529M303 522L310 524M305 517L313 526" fill="none" stroke="#8080ff" stroke-width="1"/><path d="M286 745.5L360 728" stroke="#5ac8f0" stroke-width="1.1"/><rect x="288" y="795" width="111" height="6" fill="#ffffff"/><path d="M303 802h12l-2 6h-1v22h-6v-22h-1z" fill="#ffffff"/><text x="290" y="833" font-size="26" fill="#ffffff" textLength="13" lengthAdjust="spacingAndGlyphs">A</text><path d="M1273.4 734.0 L1250.0 732.0 L1225.0 726.0 L1211.0 716.0 L1208.0 700.0 L1205.7 650.0 L1205.5 520.0 L1204.5 470.0 L1205.5 440.0 L1207.0 400.0 L1209.0 380.0 L1215.0 370.0 L1228.0 365.0 L1250.0 362.5 L1273.4 362.5 L1296.8 362.5 L1318.8 365.0 L1331.8 370.0 L1337.8 380.0 L1339.8 400.0 L1341.3 440.0 L1342.3 470.0 L1341.3 520.0 L1341.1 650.0 L1338.8 700.0 L1335.8 716.0 L1321.8 726.0 L1296.8 732.0 L1273.4 734.0 M1208.5 470.0 L1209.0 440.0 L1211.0 390.0 L1214.0 375.0 L1222.0 370.5 L1273.4 370.5 L1324.8 370.5 L1332.8 375.0 L1335.8 390.0 L1337.8 440.0 L1338.3 470.0 M1221.0 371.0 L1221.0 415.0 L1230.0 468.0 L1229.5 568.0 L1218.0 610.0 M1325.8 371.0 L1325.8 415.0 L1316.8 468.0 L1317.3 568.0 L1328.8 610.0 M1224.5 371.0 L1224.5 415.0 M1322.3 371.0 L1322.3 415.0 M1221 415Q1273 397 1326 415 M1230 464Q1273 452 1317 464 M1214.0 460.0 L1216.0 452.0 L1220.0 449.0 L1224.0 453.0 L1226.0 462.0 M1332.8 460.0 L1330.8 452.0 L1326.8 449.0 L1322.8 453.0 L1320.8 462.0 M1206.0 460.0 L1214.0 460.0 M1340.8 460.0 L1332.8 460.0 M1215.0 465.0 L1215.0 580.0 L1216.0 650.0 L1222.0 715.0 M1331.8 465.0 L1331.8 580.0 L1330.8 650.0 L1324.8 715.0 M1215.0 483.0 L1229.0 484.0 M1331.8 483.0 L1317.8 484.0 M1215.0 486.0 L1229.0 487.0 M1331.8 486.0 L1317.8 487.0 M1215.0 556.0 L1228.0 548.0 M1331.8 556.0 L1318.8 548.0 M1215.0 565.0 L1228.0 557.0 M1331.8 565.0 L1318.8 557.0 M1229 573Q1273 583 1318 573 M1218 610Q1222 631 1245 633H1301Q1324 631 1328 610 M1248.5 633.0 L1260.0 727.0 M1298.3 633.0 L1286.8 727.0 M1198.0 586.0 L1220.0 587.5 L1219.0 592.0 L1201.0 594.0 L1198.0 586.0 M1348.8 586.0 L1326.8 587.5 L1327.8 592.0 L1345.8 594.0 L1348.8 586.0 M1208.0 670.0 L1210.0 700.0 L1222.0 716.0 L1250.0 726.0 L1273.4 727.0 L1296.8 726.0 L1324.8 716.0 L1336.8 700.0 L1338.8 670.0" fill="none" stroke="#8010ff" stroke-width="1"/><circle cx="1273.4" cy="720" r="3" fill="none" stroke="#8010ff" stroke-width="1.2"/><path d="M1265.5 563V600M1265.5 610V647M1222 605.5H1260M1271 605.5H1308" stroke="#e0e0e0" stroke-width="1"/><rect x="1260.5" y="600.5" width="10" height="10" fill="none" stroke="#e0e0e0" stroke-width="1"/></g>
</svg>
</body></html>
